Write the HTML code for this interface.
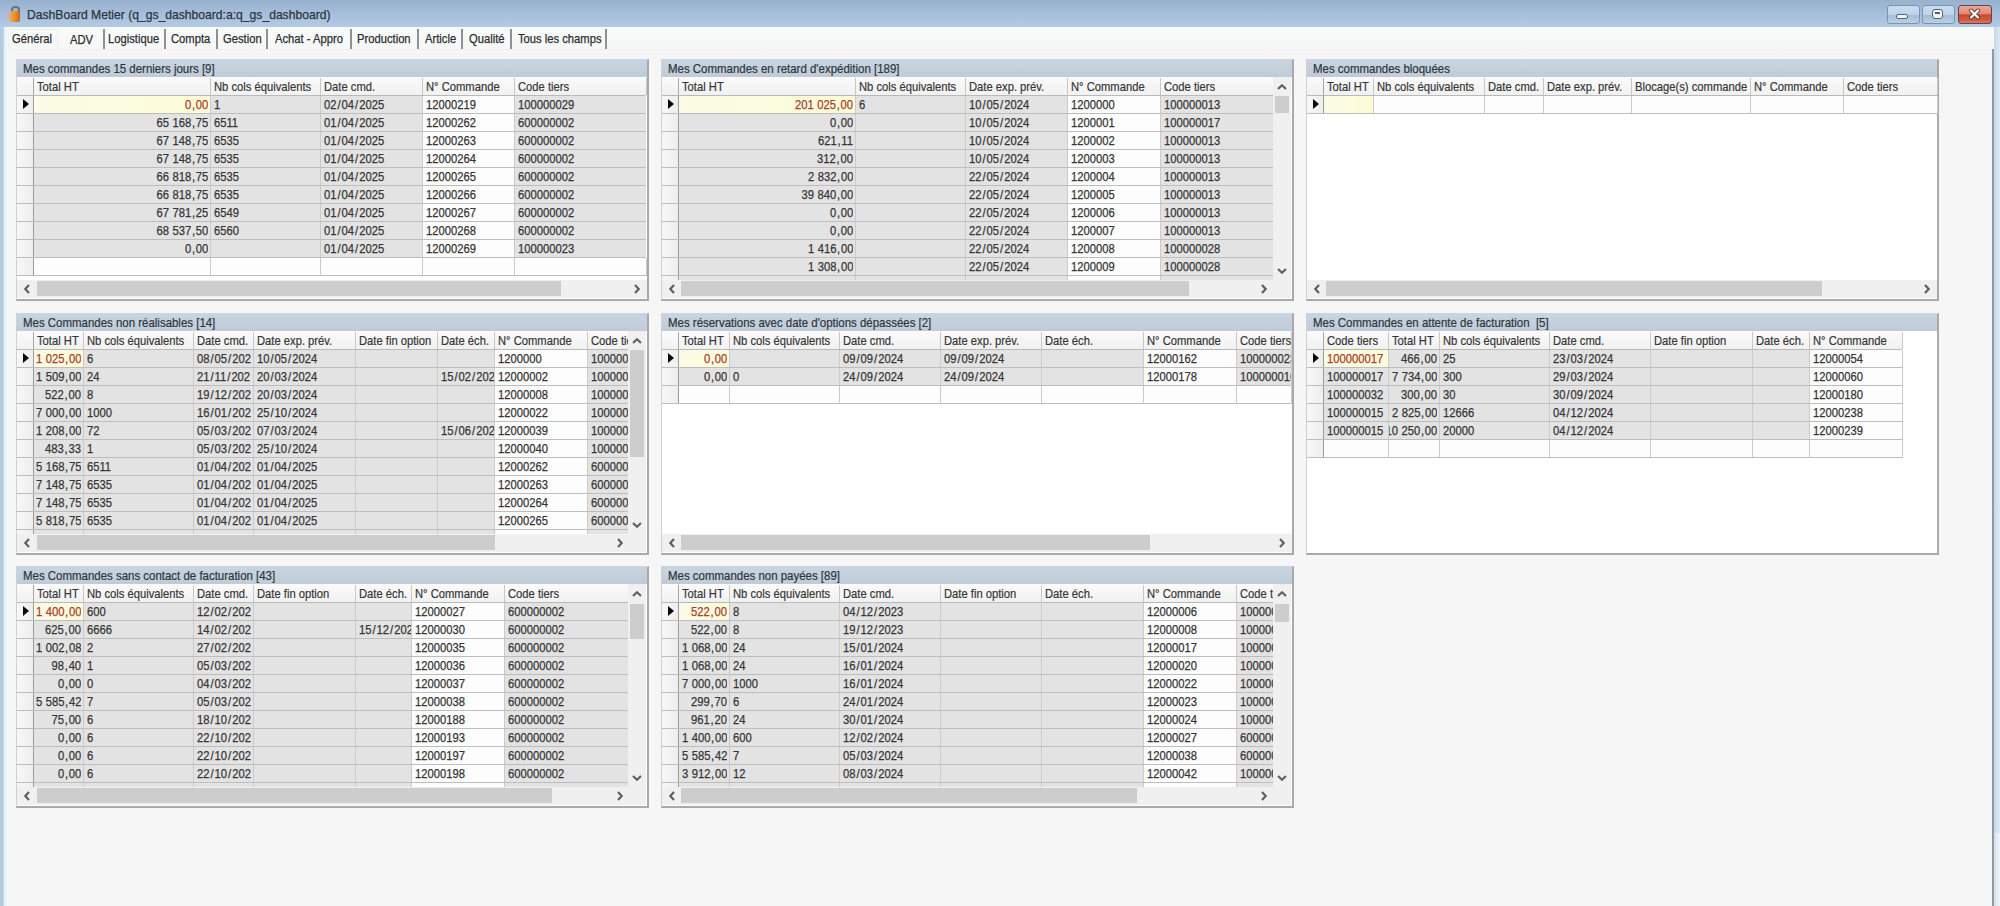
<!DOCTYPE html>
<html><head><meta charset="utf-8"><title>DashBoard Metier</title>
<style>
html,body{margin:0;padding:0;}
body{width:2000px;height:906px;position:relative;overflow:hidden;background:#f6f6f6;font-family:"Liberation Sans", sans-serif;}
.t{position:absolute;white-space:pre;overflow:hidden;font-family:"Liberation Sans", sans-serif;font-size:12.2px;-webkit-text-stroke:0.25px currentColor;}
.t i{font-style:normal;display:inline-block;transform:scaleX(0.92);transform-origin:0 50%;}
.tr{text-align:right;direction:rtl;}
.ti i{transform:scaleX(0.94);}
.th,.ti{-webkit-text-stroke:0.2px currentColor;}
.t b{font-weight:normal;}
.t b.sl{margin:0 1.1px;}
.t b.cm{margin:0 0.8px;}
.t b.sp{margin:0 0.2px;}
.tr i{transform-origin:100% 50%;direction:ltr;unicode-bidi:embed;}
</style></head><body>
<!-- window frame -->
<div style="position:absolute;left:0;top:0;width:2000px;height:27px;background:linear-gradient(#98b1cf,#b3cbe4)"></div>
<div style="position:absolute;left:0;top:27px;width:4px;height:879px;background:linear-gradient(90deg,#b0c8e2,#bcd2e8)"></div><div style="position:absolute;left:4px;top:27px;width:3px;height:879px;background:#eaf4f8"></div>
<div style="position:absolute;left:1992px;top:49px;width:2px;height:857px;background:#8c9aa6"></div>
<div style="position:absolute;left:1994px;top:27px;width:6px;height:806px;background:linear-gradient(90deg,#c6d8e8,#dfe9f2)"></div><div style="position:absolute;left:1994px;top:833px;width:6px;height:73px;background:linear-gradient(90deg,#d4e2ee,#f2f6f9)"></div>
<!-- lock icon -->
<div style="position:absolute;left:11px;top:6px;width:5px;height:6px;border:2px solid #66757e;border-bottom:none;border-radius:4px 4px 0 0"></div>
<div style="position:absolute;left:9px;top:11px;width:11px;height:11px;border-radius:4px 4px 2px 2px;background:linear-gradient(90deg,#f0b060,#e8892a 60%,#c06a20)"></div>
<div class="t" style="left:27px;top:5px;height:20px;line-height:20px;font-size:13.2px;color:#2a3440"><i>DashBoard Metier (q_gs_dashboard:a:q_gs_dashboard)</i></div>
<!-- window buttons -->
<div style="position:absolute;left:1887px;top:5px;width:33px;height:19px;border:1.5px solid #7a93b0;border-radius:3px;background:linear-gradient(#c8dcf0,#bed3ea 50%,#a4bcd6 52%,#b8cfe6);box-sizing:border-box"></div>
<div style="position:absolute;left:1896px;top:14px;width:10px;height:3px;border:1.2px solid #56646f;border-radius:2px;background:#f2f5f8"></div>
<div style="position:absolute;left:1922px;top:5px;width:33px;height:19px;border:1.5px solid #7a93b0;border-radius:3px;background:linear-gradient(#c8dcf0,#bed3ea 50%,#a4bcd6 52%,#b8cfe6);box-sizing:border-box"></div>
<div style="position:absolute;left:1932px;top:9px;width:9px;height:8px;border:1.5px solid #56646f;border-radius:3px;background:#f2f5f8"></div>
<div style="position:absolute;left:1935px;top:12px;width:5px;height:2px;background:#56646f"></div>
<div style="position:absolute;left:1958px;top:5px;width:34px;height:19px;border:1.5px solid #6a4040;border-radius:3px;background:linear-gradient(#eaa898,#e08a78 45%,#c84a2e 52%,#cc5a40 80%,#d87a66);box-sizing:border-box"></div>
<svg style="position:absolute;left:1968px;top:8px" width="13" height="12" viewBox="0 0 13 12"><path d="M3 2.5 L10 9.5 M10 2.5 L3 9.5" stroke="#5a3a3a" stroke-width="4" stroke-linecap="round"/><path d="M3 2.5 L10 9.5 M10 2.5 L3 9.5" stroke="#fbf4f2" stroke-width="2.3" stroke-linecap="round"/></svg>
<!-- tab strip -->
<div style="position:absolute;left:7px;top:27px;width:1987px;height:22px;background:linear-gradient(#f8fbfb,#f6f7f7)"></div><div style="position:absolute;left:7px;top:49px;width:1985px;height:1px;background:#f0f0f0"></div>
<div style="position:absolute;left:8px;top:29px;width:50px;height:20px;border:1px solid #efefef;border-bottom:none;box-sizing:border-box"></div>
<div class="t" style="left:12px;top:30px;height:18px;line-height:18px;color:#2e2e2e"><i>Général</i></div>
<div class="t" style="left:70px;top:31px;height:18px;line-height:18px;color:#2e2e2e"><i>ADV</i></div>
<div class="t" style="left:108px;top:30px;height:18px;line-height:18px;color:#2e2e2e"><i>Logistique</i></div>
<div style="position:absolute;left:103px;top:29px;width:2px;height:20px;background:#909090"></div>
<div class="t" style="left:171px;top:30px;height:18px;line-height:18px;color:#2e2e2e"><i>Compta</i></div>
<div style="position:absolute;left:164px;top:29px;width:2px;height:20px;background:#909090"></div>
<div class="t" style="left:223px;top:30px;height:18px;line-height:18px;color:#2e2e2e"><i>Gestion</i></div>
<div style="position:absolute;left:216px;top:29px;width:2px;height:20px;background:#909090"></div>
<div class="t" style="left:275px;top:30px;height:18px;line-height:18px;color:#2e2e2e"><i>Achat - Appro</i></div>
<div style="position:absolute;left:266px;top:29px;width:2px;height:20px;background:#909090"></div>
<div class="t" style="left:357px;top:30px;height:18px;line-height:18px;color:#2e2e2e"><i>Production</i></div>
<div style="position:absolute;left:350px;top:29px;width:2px;height:20px;background:#909090"></div>
<div class="t" style="left:425px;top:30px;height:18px;line-height:18px;color:#2e2e2e"><i>Article</i></div>
<div style="position:absolute;left:417px;top:29px;width:2px;height:20px;background:#909090"></div>
<div class="t" style="left:469px;top:30px;height:18px;line-height:18px;color:#2e2e2e"><i>Qualité</i></div>
<div style="position:absolute;left:461px;top:29px;width:2px;height:20px;background:#909090"></div>
<div class="t" style="left:518px;top:30px;height:18px;line-height:18px;color:#2e2e2e"><i>Tous les champs</i></div>
<div style="position:absolute;left:510px;top:29px;width:2px;height:20px;background:#909090"></div>
<div style="position:absolute;left:605px;top:29px;width:2px;height:20px;background:#909090"></div>
<div style="position:absolute;left:16px;top:59px;width:633px;height:242px;background:#ffffff;box-sizing:border-box;border-left:1px solid #d0d0d0;border-top:1px solid #d6d6d6;border-right:2px solid #a9a9a9;border-bottom:2px solid #a9a9a9;"></div>
<div style="position:absolute;left:17px;top:59px;width:630px;height:18px;background:linear-gradient(#c9d5e0,#bfccd8);"></div>
<div class="t ti" style="left:23px;top:60px;width:500px;height:17px;text-align:left;line-height:17px;color:#2e353c;line-height:19px"><i>Mes commandes 15 derniers jours [9]</i></div>
<div style="position:absolute;left:17px;top:77px;width:629px;height:18px;background:linear-gradient(#fbfbfb,#f1f1f1);"></div>
<div style="position:absolute;left:17px;top:95px;width:629px;height:1px;background:#b9b9b9;"></div>
<div style="position:absolute;left:33px;top:78px;width:1px;height:17px;background:#a8a8a8;"></div>
<div style="position:absolute;left:210px;top:78px;width:1px;height:17px;background:#c8c8c8;"></div>
<div style="position:absolute;left:320px;top:78px;width:1px;height:17px;background:#c8c8c8;"></div>
<div style="position:absolute;left:422px;top:78px;width:1px;height:17px;background:#c8c8c8;"></div>
<div style="position:absolute;left:514px;top:78px;width:1px;height:17px;background:#c8c8c8;"></div>
<div class="t th" style="left:37px;top:77px;width:173px;height:18px;line-height:20px;color:#363636"><i>Total HT</i></div>
<div class="t th" style="left:214px;top:77px;width:106px;height:18px;line-height:20px;color:#363636"><i>Nb cols équivalents</i></div>
<div class="t th" style="left:324px;top:77px;width:98px;height:18px;line-height:20px;color:#363636"><i>Date cmd.</i></div>
<div class="t th" style="left:426px;top:77px;width:88px;height:18px;line-height:20px;color:#363636"><i>N° Commande</i></div>
<div class="t th" style="left:518px;top:77px;width:128px;height:18px;line-height:20px;color:#363636"><i>Code tiers</i></div>
<div style="position:absolute;left:17px;top:96px;width:16px;height:17px;background:linear-gradient(90deg,#f7f7f7,#eeeeee);"></div>
<div style="position:absolute;left:23px;top:99px;width:0;height:0;border-top:5.5px solid transparent;border-bottom:5.5px solid transparent;border-left:6px solid #0a0a0a"></div>
<div style="position:absolute;left:34px;top:96px;width:176px;height:17px;background:linear-gradient(90deg,#fbfbe6,#fcfcd8);"></div>
<div class="t tr" style="left:34px;top:96px;width:174px;height:17px;line-height:18px;color:#a8402a"><i>0<b class="cm">,</b>00</i></div>
<div style="position:absolute;left:211px;top:96px;width:109px;height:17px;background:#e3e3e3;"></div>
<div class="t" style="left:214px;top:96px;width:106px;height:17px;line-height:18px;color:#353535"><i>1</i></div>
<div style="position:absolute;left:321px;top:96px;width:101px;height:17px;background:#e3e3e3;"></div>
<div class="t" style="left:324px;top:96px;width:98px;height:17px;line-height:18px;color:#353535"><i>02<b class="sl">/</b>04<b class="sl">/</b>2025</i></div>
<div style="position:absolute;left:423px;top:96px;width:91px;height:17px;background:#fdfdfd;"></div>
<div class="t" style="left:426px;top:96px;width:88px;height:17px;line-height:18px;color:#353535"><i>12000219</i></div>
<div style="position:absolute;left:515px;top:96px;width:131px;height:17px;background:#e3e3e3;"></div>
<div class="t" style="left:518px;top:96px;width:128px;height:17px;line-height:18px;color:#353535"><i>100000029</i></div>
<div style="position:absolute;left:17px;top:113px;width:629px;height:1px;background:#bdbdbd;"></div>
<div style="position:absolute;left:33px;top:96px;width:1px;height:17px;background:#9c9c9c;"></div>
<div style="position:absolute;left:210px;top:96px;width:1px;height:17px;background:#cbcbcb;"></div>
<div style="position:absolute;left:320px;top:96px;width:1px;height:17px;background:#cbcbcb;"></div>
<div style="position:absolute;left:422px;top:96px;width:1px;height:17px;background:#cbcbcb;"></div>
<div style="position:absolute;left:514px;top:96px;width:1px;height:17px;background:#cbcbcb;"></div>
<div style="position:absolute;left:17px;top:114px;width:16px;height:17px;background:linear-gradient(90deg,#f7f7f7,#eeeeee);"></div>
<div style="position:absolute;left:34px;top:114px;width:176px;height:17px;background:#e3e3e3;"></div>
<div class="t tr" style="left:34px;top:114px;width:174px;height:17px;line-height:18px;color:#353535"><i>65<b class="sp"> </b>168<b class="cm">,</b>75</i></div>
<div style="position:absolute;left:211px;top:114px;width:109px;height:17px;background:#e3e3e3;"></div>
<div class="t" style="left:214px;top:114px;width:106px;height:17px;line-height:18px;color:#353535"><i>6511</i></div>
<div style="position:absolute;left:321px;top:114px;width:101px;height:17px;background:#e3e3e3;"></div>
<div class="t" style="left:324px;top:114px;width:98px;height:17px;line-height:18px;color:#353535"><i>01<b class="sl">/</b>04<b class="sl">/</b>2025</i></div>
<div style="position:absolute;left:423px;top:114px;width:91px;height:17px;background:#fdfdfd;"></div>
<div class="t" style="left:426px;top:114px;width:88px;height:17px;line-height:18px;color:#353535"><i>12000262</i></div>
<div style="position:absolute;left:515px;top:114px;width:131px;height:17px;background:#e3e3e3;"></div>
<div class="t" style="left:518px;top:114px;width:128px;height:17px;line-height:18px;color:#353535"><i>600000002</i></div>
<div style="position:absolute;left:17px;top:131px;width:629px;height:1px;background:#bdbdbd;"></div>
<div style="position:absolute;left:33px;top:114px;width:1px;height:17px;background:#9c9c9c;"></div>
<div style="position:absolute;left:210px;top:114px;width:1px;height:17px;background:#cbcbcb;"></div>
<div style="position:absolute;left:320px;top:114px;width:1px;height:17px;background:#cbcbcb;"></div>
<div style="position:absolute;left:422px;top:114px;width:1px;height:17px;background:#cbcbcb;"></div>
<div style="position:absolute;left:514px;top:114px;width:1px;height:17px;background:#cbcbcb;"></div>
<div style="position:absolute;left:17px;top:132px;width:16px;height:17px;background:linear-gradient(90deg,#f7f7f7,#eeeeee);"></div>
<div style="position:absolute;left:34px;top:132px;width:176px;height:17px;background:#e3e3e3;"></div>
<div class="t tr" style="left:34px;top:132px;width:174px;height:17px;line-height:18px;color:#353535"><i>67<b class="sp"> </b>148<b class="cm">,</b>75</i></div>
<div style="position:absolute;left:211px;top:132px;width:109px;height:17px;background:#e3e3e3;"></div>
<div class="t" style="left:214px;top:132px;width:106px;height:17px;line-height:18px;color:#353535"><i>6535</i></div>
<div style="position:absolute;left:321px;top:132px;width:101px;height:17px;background:#e3e3e3;"></div>
<div class="t" style="left:324px;top:132px;width:98px;height:17px;line-height:18px;color:#353535"><i>01<b class="sl">/</b>04<b class="sl">/</b>2025</i></div>
<div style="position:absolute;left:423px;top:132px;width:91px;height:17px;background:#fdfdfd;"></div>
<div class="t" style="left:426px;top:132px;width:88px;height:17px;line-height:18px;color:#353535"><i>12000263</i></div>
<div style="position:absolute;left:515px;top:132px;width:131px;height:17px;background:#e3e3e3;"></div>
<div class="t" style="left:518px;top:132px;width:128px;height:17px;line-height:18px;color:#353535"><i>600000002</i></div>
<div style="position:absolute;left:17px;top:149px;width:629px;height:1px;background:#bdbdbd;"></div>
<div style="position:absolute;left:33px;top:132px;width:1px;height:17px;background:#9c9c9c;"></div>
<div style="position:absolute;left:210px;top:132px;width:1px;height:17px;background:#cbcbcb;"></div>
<div style="position:absolute;left:320px;top:132px;width:1px;height:17px;background:#cbcbcb;"></div>
<div style="position:absolute;left:422px;top:132px;width:1px;height:17px;background:#cbcbcb;"></div>
<div style="position:absolute;left:514px;top:132px;width:1px;height:17px;background:#cbcbcb;"></div>
<div style="position:absolute;left:17px;top:150px;width:16px;height:17px;background:linear-gradient(90deg,#f7f7f7,#eeeeee);"></div>
<div style="position:absolute;left:34px;top:150px;width:176px;height:17px;background:#e3e3e3;"></div>
<div class="t tr" style="left:34px;top:150px;width:174px;height:17px;line-height:18px;color:#353535"><i>67<b class="sp"> </b>148<b class="cm">,</b>75</i></div>
<div style="position:absolute;left:211px;top:150px;width:109px;height:17px;background:#e3e3e3;"></div>
<div class="t" style="left:214px;top:150px;width:106px;height:17px;line-height:18px;color:#353535"><i>6535</i></div>
<div style="position:absolute;left:321px;top:150px;width:101px;height:17px;background:#e3e3e3;"></div>
<div class="t" style="left:324px;top:150px;width:98px;height:17px;line-height:18px;color:#353535"><i>01<b class="sl">/</b>04<b class="sl">/</b>2025</i></div>
<div style="position:absolute;left:423px;top:150px;width:91px;height:17px;background:#fdfdfd;"></div>
<div class="t" style="left:426px;top:150px;width:88px;height:17px;line-height:18px;color:#353535"><i>12000264</i></div>
<div style="position:absolute;left:515px;top:150px;width:131px;height:17px;background:#e3e3e3;"></div>
<div class="t" style="left:518px;top:150px;width:128px;height:17px;line-height:18px;color:#353535"><i>600000002</i></div>
<div style="position:absolute;left:17px;top:167px;width:629px;height:1px;background:#bdbdbd;"></div>
<div style="position:absolute;left:33px;top:150px;width:1px;height:17px;background:#9c9c9c;"></div>
<div style="position:absolute;left:210px;top:150px;width:1px;height:17px;background:#cbcbcb;"></div>
<div style="position:absolute;left:320px;top:150px;width:1px;height:17px;background:#cbcbcb;"></div>
<div style="position:absolute;left:422px;top:150px;width:1px;height:17px;background:#cbcbcb;"></div>
<div style="position:absolute;left:514px;top:150px;width:1px;height:17px;background:#cbcbcb;"></div>
<div style="position:absolute;left:17px;top:168px;width:16px;height:17px;background:linear-gradient(90deg,#f7f7f7,#eeeeee);"></div>
<div style="position:absolute;left:34px;top:168px;width:176px;height:17px;background:#e3e3e3;"></div>
<div class="t tr" style="left:34px;top:168px;width:174px;height:17px;line-height:18px;color:#353535"><i>66<b class="sp"> </b>818<b class="cm">,</b>75</i></div>
<div style="position:absolute;left:211px;top:168px;width:109px;height:17px;background:#e3e3e3;"></div>
<div class="t" style="left:214px;top:168px;width:106px;height:17px;line-height:18px;color:#353535"><i>6535</i></div>
<div style="position:absolute;left:321px;top:168px;width:101px;height:17px;background:#e3e3e3;"></div>
<div class="t" style="left:324px;top:168px;width:98px;height:17px;line-height:18px;color:#353535"><i>01<b class="sl">/</b>04<b class="sl">/</b>2025</i></div>
<div style="position:absolute;left:423px;top:168px;width:91px;height:17px;background:#fdfdfd;"></div>
<div class="t" style="left:426px;top:168px;width:88px;height:17px;line-height:18px;color:#353535"><i>12000265</i></div>
<div style="position:absolute;left:515px;top:168px;width:131px;height:17px;background:#e3e3e3;"></div>
<div class="t" style="left:518px;top:168px;width:128px;height:17px;line-height:18px;color:#353535"><i>600000002</i></div>
<div style="position:absolute;left:17px;top:185px;width:629px;height:1px;background:#bdbdbd;"></div>
<div style="position:absolute;left:33px;top:168px;width:1px;height:17px;background:#9c9c9c;"></div>
<div style="position:absolute;left:210px;top:168px;width:1px;height:17px;background:#cbcbcb;"></div>
<div style="position:absolute;left:320px;top:168px;width:1px;height:17px;background:#cbcbcb;"></div>
<div style="position:absolute;left:422px;top:168px;width:1px;height:17px;background:#cbcbcb;"></div>
<div style="position:absolute;left:514px;top:168px;width:1px;height:17px;background:#cbcbcb;"></div>
<div style="position:absolute;left:17px;top:186px;width:16px;height:17px;background:linear-gradient(90deg,#f7f7f7,#eeeeee);"></div>
<div style="position:absolute;left:34px;top:186px;width:176px;height:17px;background:#e3e3e3;"></div>
<div class="t tr" style="left:34px;top:186px;width:174px;height:17px;line-height:18px;color:#353535"><i>66<b class="sp"> </b>818<b class="cm">,</b>75</i></div>
<div style="position:absolute;left:211px;top:186px;width:109px;height:17px;background:#e3e3e3;"></div>
<div class="t" style="left:214px;top:186px;width:106px;height:17px;line-height:18px;color:#353535"><i>6535</i></div>
<div style="position:absolute;left:321px;top:186px;width:101px;height:17px;background:#e3e3e3;"></div>
<div class="t" style="left:324px;top:186px;width:98px;height:17px;line-height:18px;color:#353535"><i>01<b class="sl">/</b>04<b class="sl">/</b>2025</i></div>
<div style="position:absolute;left:423px;top:186px;width:91px;height:17px;background:#fdfdfd;"></div>
<div class="t" style="left:426px;top:186px;width:88px;height:17px;line-height:18px;color:#353535"><i>12000266</i></div>
<div style="position:absolute;left:515px;top:186px;width:131px;height:17px;background:#e3e3e3;"></div>
<div class="t" style="left:518px;top:186px;width:128px;height:17px;line-height:18px;color:#353535"><i>600000002</i></div>
<div style="position:absolute;left:17px;top:203px;width:629px;height:1px;background:#bdbdbd;"></div>
<div style="position:absolute;left:33px;top:186px;width:1px;height:17px;background:#9c9c9c;"></div>
<div style="position:absolute;left:210px;top:186px;width:1px;height:17px;background:#cbcbcb;"></div>
<div style="position:absolute;left:320px;top:186px;width:1px;height:17px;background:#cbcbcb;"></div>
<div style="position:absolute;left:422px;top:186px;width:1px;height:17px;background:#cbcbcb;"></div>
<div style="position:absolute;left:514px;top:186px;width:1px;height:17px;background:#cbcbcb;"></div>
<div style="position:absolute;left:17px;top:204px;width:16px;height:17px;background:linear-gradient(90deg,#f7f7f7,#eeeeee);"></div>
<div style="position:absolute;left:34px;top:204px;width:176px;height:17px;background:#e3e3e3;"></div>
<div class="t tr" style="left:34px;top:204px;width:174px;height:17px;line-height:18px;color:#353535"><i>67<b class="sp"> </b>781<b class="cm">,</b>25</i></div>
<div style="position:absolute;left:211px;top:204px;width:109px;height:17px;background:#e3e3e3;"></div>
<div class="t" style="left:214px;top:204px;width:106px;height:17px;line-height:18px;color:#353535"><i>6549</i></div>
<div style="position:absolute;left:321px;top:204px;width:101px;height:17px;background:#e3e3e3;"></div>
<div class="t" style="left:324px;top:204px;width:98px;height:17px;line-height:18px;color:#353535"><i>01<b class="sl">/</b>04<b class="sl">/</b>2025</i></div>
<div style="position:absolute;left:423px;top:204px;width:91px;height:17px;background:#fdfdfd;"></div>
<div class="t" style="left:426px;top:204px;width:88px;height:17px;line-height:18px;color:#353535"><i>12000267</i></div>
<div style="position:absolute;left:515px;top:204px;width:131px;height:17px;background:#e3e3e3;"></div>
<div class="t" style="left:518px;top:204px;width:128px;height:17px;line-height:18px;color:#353535"><i>600000002</i></div>
<div style="position:absolute;left:17px;top:221px;width:629px;height:1px;background:#bdbdbd;"></div>
<div style="position:absolute;left:33px;top:204px;width:1px;height:17px;background:#9c9c9c;"></div>
<div style="position:absolute;left:210px;top:204px;width:1px;height:17px;background:#cbcbcb;"></div>
<div style="position:absolute;left:320px;top:204px;width:1px;height:17px;background:#cbcbcb;"></div>
<div style="position:absolute;left:422px;top:204px;width:1px;height:17px;background:#cbcbcb;"></div>
<div style="position:absolute;left:514px;top:204px;width:1px;height:17px;background:#cbcbcb;"></div>
<div style="position:absolute;left:17px;top:222px;width:16px;height:17px;background:linear-gradient(90deg,#f7f7f7,#eeeeee);"></div>
<div style="position:absolute;left:34px;top:222px;width:176px;height:17px;background:#e3e3e3;"></div>
<div class="t tr" style="left:34px;top:222px;width:174px;height:17px;line-height:18px;color:#353535"><i>68<b class="sp"> </b>537<b class="cm">,</b>50</i></div>
<div style="position:absolute;left:211px;top:222px;width:109px;height:17px;background:#e3e3e3;"></div>
<div class="t" style="left:214px;top:222px;width:106px;height:17px;line-height:18px;color:#353535"><i>6560</i></div>
<div style="position:absolute;left:321px;top:222px;width:101px;height:17px;background:#e3e3e3;"></div>
<div class="t" style="left:324px;top:222px;width:98px;height:17px;line-height:18px;color:#353535"><i>01<b class="sl">/</b>04<b class="sl">/</b>2025</i></div>
<div style="position:absolute;left:423px;top:222px;width:91px;height:17px;background:#fdfdfd;"></div>
<div class="t" style="left:426px;top:222px;width:88px;height:17px;line-height:18px;color:#353535"><i>12000268</i></div>
<div style="position:absolute;left:515px;top:222px;width:131px;height:17px;background:#e3e3e3;"></div>
<div class="t" style="left:518px;top:222px;width:128px;height:17px;line-height:18px;color:#353535"><i>600000002</i></div>
<div style="position:absolute;left:17px;top:239px;width:629px;height:1px;background:#bdbdbd;"></div>
<div style="position:absolute;left:33px;top:222px;width:1px;height:17px;background:#9c9c9c;"></div>
<div style="position:absolute;left:210px;top:222px;width:1px;height:17px;background:#cbcbcb;"></div>
<div style="position:absolute;left:320px;top:222px;width:1px;height:17px;background:#cbcbcb;"></div>
<div style="position:absolute;left:422px;top:222px;width:1px;height:17px;background:#cbcbcb;"></div>
<div style="position:absolute;left:514px;top:222px;width:1px;height:17px;background:#cbcbcb;"></div>
<div style="position:absolute;left:17px;top:240px;width:16px;height:17px;background:linear-gradient(90deg,#f7f7f7,#eeeeee);"></div>
<div style="position:absolute;left:34px;top:240px;width:176px;height:17px;background:#e3e3e3;"></div>
<div class="t tr" style="left:34px;top:240px;width:174px;height:17px;line-height:18px;color:#353535"><i>0<b class="cm">,</b>00</i></div>
<div style="position:absolute;left:211px;top:240px;width:109px;height:17px;background:#e3e3e3;"></div>
<div style="position:absolute;left:321px;top:240px;width:101px;height:17px;background:#e3e3e3;"></div>
<div class="t" style="left:324px;top:240px;width:98px;height:17px;line-height:18px;color:#353535"><i>01<b class="sl">/</b>04<b class="sl">/</b>2025</i></div>
<div style="position:absolute;left:423px;top:240px;width:91px;height:17px;background:#fdfdfd;"></div>
<div class="t" style="left:426px;top:240px;width:88px;height:17px;line-height:18px;color:#353535"><i>12000269</i></div>
<div style="position:absolute;left:515px;top:240px;width:131px;height:17px;background:#e3e3e3;"></div>
<div class="t" style="left:518px;top:240px;width:128px;height:17px;line-height:18px;color:#353535"><i>100000023</i></div>
<div style="position:absolute;left:17px;top:257px;width:629px;height:1px;background:#bdbdbd;"></div>
<div style="position:absolute;left:33px;top:240px;width:1px;height:17px;background:#9c9c9c;"></div>
<div style="position:absolute;left:210px;top:240px;width:1px;height:17px;background:#cbcbcb;"></div>
<div style="position:absolute;left:320px;top:240px;width:1px;height:17px;background:#cbcbcb;"></div>
<div style="position:absolute;left:422px;top:240px;width:1px;height:17px;background:#cbcbcb;"></div>
<div style="position:absolute;left:514px;top:240px;width:1px;height:17px;background:#cbcbcb;"></div>
<div style="position:absolute;left:17px;top:258px;width:16px;height:17px;background:linear-gradient(90deg,#f7f7f7,#eeeeee);"></div>
<div style="position:absolute;left:34px;top:258px;width:176px;height:17px;background:#fdfdfd;"></div>
<div style="position:absolute;left:211px;top:258px;width:109px;height:17px;background:#fdfdfd;"></div>
<div style="position:absolute;left:321px;top:258px;width:101px;height:17px;background:#fdfdfd;"></div>
<div style="position:absolute;left:423px;top:258px;width:91px;height:17px;background:#fdfdfd;"></div>
<div style="position:absolute;left:515px;top:258px;width:131px;height:17px;background:#fdfdfd;"></div>
<div style="position:absolute;left:17px;top:275px;width:629px;height:1px;background:#bdbdbd;"></div>
<div style="position:absolute;left:33px;top:258px;width:1px;height:17px;background:#9c9c9c;"></div>
<div style="position:absolute;left:210px;top:258px;width:1px;height:17px;background:#cbcbcb;"></div>
<div style="position:absolute;left:320px;top:258px;width:1px;height:17px;background:#cbcbcb;"></div>
<div style="position:absolute;left:422px;top:258px;width:1px;height:17px;background:#cbcbcb;"></div>
<div style="position:absolute;left:514px;top:258px;width:1px;height:17px;background:#cbcbcb;"></div>
<div style="position:absolute;left:646px;top:258px;width:1px;height:18px;background:#cbcbcb;"></div>
<div style="position:absolute;left:646px;top:78px;width:1px;height:17px;background:#c8c8c8;"></div>
<div style="position:absolute;left:17px;top:280px;width:630px;height:18px;background:#f0f0f0;"></div>
<div style="position:absolute;left:37px;top:281px;width:524px;height:15px;background:#cdcdcd;"></div>
<div style="position:absolute;left:24px;top:284px;line-height:0"><svg width="6" height="10" viewBox="0 0 6 10"><path d="M5 1 L1.3 5 L5 9" fill="none" stroke="#606060" stroke-width="2.2"/></svg></div>
<div style="position:absolute;left:634px;top:284px;line-height:0"><svg width="6" height="10" viewBox="0 0 6 10"><path d="M1 1 L4.7 5 L1 9" fill="none" stroke="#606060" stroke-width="2.2"/></svg></div>
<div style="position:absolute;left:661px;top:59px;width:633px;height:242px;background:#ffffff;box-sizing:border-box;border-left:1px solid #d0d0d0;border-top:1px solid #d6d6d6;border-right:2px solid #a9a9a9;border-bottom:2px solid #a9a9a9;"></div>
<div style="position:absolute;left:662px;top:59px;width:630px;height:18px;background:linear-gradient(#c9d5e0,#bfccd8);"></div>
<div class="t ti" style="left:668px;top:60px;width:500px;height:17px;text-align:left;line-height:17px;color:#2e353c;line-height:19px"><i>Mes Commandes en retard d&#x27;expédition [189]</i></div>
<div style="position:absolute;left:662px;top:77px;width:611px;height:18px;background:linear-gradient(#fbfbfb,#f1f1f1);"></div>
<div style="position:absolute;left:662px;top:95px;width:611px;height:1px;background:#b9b9b9;"></div>
<div style="position:absolute;left:678px;top:78px;width:1px;height:17px;background:#a8a8a8;"></div>
<div style="position:absolute;left:855px;top:78px;width:1px;height:17px;background:#c8c8c8;"></div>
<div style="position:absolute;left:965px;top:78px;width:1px;height:17px;background:#c8c8c8;"></div>
<div style="position:absolute;left:1067px;top:78px;width:1px;height:17px;background:#c8c8c8;"></div>
<div style="position:absolute;left:1160px;top:78px;width:1px;height:17px;background:#c8c8c8;"></div>
<div class="t th" style="left:682px;top:77px;width:173px;height:18px;line-height:20px;color:#363636"><i>Total HT</i></div>
<div class="t th" style="left:859px;top:77px;width:106px;height:18px;line-height:20px;color:#363636"><i>Nb cols équivalents</i></div>
<div class="t th" style="left:969px;top:77px;width:98px;height:18px;line-height:20px;color:#363636"><i>Date exp. prév.</i></div>
<div class="t th" style="left:1071px;top:77px;width:89px;height:18px;line-height:20px;color:#363636"><i>N° Commande</i></div>
<div class="t th" style="left:1164px;top:77px;width:109px;height:18px;line-height:20px;color:#363636"><i>Code tiers</i></div>
<div style="position:absolute;left:662px;top:96px;width:16px;height:17px;background:linear-gradient(90deg,#f7f7f7,#eeeeee);"></div>
<div style="position:absolute;left:668px;top:99px;width:0;height:0;border-top:5.5px solid transparent;border-bottom:5.5px solid transparent;border-left:6px solid #0a0a0a"></div>
<div style="position:absolute;left:679px;top:96px;width:176px;height:17px;background:linear-gradient(90deg,#fbfbe6,#fcfcd8);"></div>
<div class="t tr" style="left:679px;top:96px;width:174px;height:17px;line-height:18px;color:#a8402a"><i>201<b class="sp"> </b>025<b class="cm">,</b>00</i></div>
<div style="position:absolute;left:856px;top:96px;width:109px;height:17px;background:#e3e3e3;"></div>
<div class="t" style="left:859px;top:96px;width:106px;height:17px;line-height:18px;color:#353535"><i>6</i></div>
<div style="position:absolute;left:966px;top:96px;width:101px;height:17px;background:#e3e3e3;"></div>
<div class="t" style="left:969px;top:96px;width:98px;height:17px;line-height:18px;color:#353535"><i>10<b class="sl">/</b>05<b class="sl">/</b>2024</i></div>
<div style="position:absolute;left:1068px;top:96px;width:92px;height:17px;background:#fdfdfd;"></div>
<div class="t" style="left:1071px;top:96px;width:89px;height:17px;line-height:18px;color:#353535"><i>1200000</i></div>
<div style="position:absolute;left:1161px;top:96px;width:112px;height:17px;background:#e3e3e3;"></div>
<div class="t" style="left:1164px;top:96px;width:109px;height:17px;line-height:18px;color:#353535"><i>100000013</i></div>
<div style="position:absolute;left:662px;top:113px;width:611px;height:1px;background:#bdbdbd;"></div>
<div style="position:absolute;left:678px;top:96px;width:1px;height:17px;background:#9c9c9c;"></div>
<div style="position:absolute;left:855px;top:96px;width:1px;height:17px;background:#cbcbcb;"></div>
<div style="position:absolute;left:965px;top:96px;width:1px;height:17px;background:#cbcbcb;"></div>
<div style="position:absolute;left:1067px;top:96px;width:1px;height:17px;background:#cbcbcb;"></div>
<div style="position:absolute;left:1160px;top:96px;width:1px;height:17px;background:#cbcbcb;"></div>
<div style="position:absolute;left:662px;top:114px;width:16px;height:17px;background:linear-gradient(90deg,#f7f7f7,#eeeeee);"></div>
<div style="position:absolute;left:679px;top:114px;width:176px;height:17px;background:#e3e3e3;"></div>
<div class="t tr" style="left:679px;top:114px;width:174px;height:17px;line-height:18px;color:#353535"><i>0<b class="cm">,</b>00</i></div>
<div style="position:absolute;left:856px;top:114px;width:109px;height:17px;background:#e3e3e3;"></div>
<div style="position:absolute;left:966px;top:114px;width:101px;height:17px;background:#e3e3e3;"></div>
<div class="t" style="left:969px;top:114px;width:98px;height:17px;line-height:18px;color:#353535"><i>10<b class="sl">/</b>05<b class="sl">/</b>2024</i></div>
<div style="position:absolute;left:1068px;top:114px;width:92px;height:17px;background:#fdfdfd;"></div>
<div class="t" style="left:1071px;top:114px;width:89px;height:17px;line-height:18px;color:#353535"><i>1200001</i></div>
<div style="position:absolute;left:1161px;top:114px;width:112px;height:17px;background:#e3e3e3;"></div>
<div class="t" style="left:1164px;top:114px;width:109px;height:17px;line-height:18px;color:#353535"><i>100000017</i></div>
<div style="position:absolute;left:662px;top:131px;width:611px;height:1px;background:#bdbdbd;"></div>
<div style="position:absolute;left:678px;top:114px;width:1px;height:17px;background:#9c9c9c;"></div>
<div style="position:absolute;left:855px;top:114px;width:1px;height:17px;background:#cbcbcb;"></div>
<div style="position:absolute;left:965px;top:114px;width:1px;height:17px;background:#cbcbcb;"></div>
<div style="position:absolute;left:1067px;top:114px;width:1px;height:17px;background:#cbcbcb;"></div>
<div style="position:absolute;left:1160px;top:114px;width:1px;height:17px;background:#cbcbcb;"></div>
<div style="position:absolute;left:662px;top:132px;width:16px;height:17px;background:linear-gradient(90deg,#f7f7f7,#eeeeee);"></div>
<div style="position:absolute;left:679px;top:132px;width:176px;height:17px;background:#e3e3e3;"></div>
<div class="t tr" style="left:679px;top:132px;width:174px;height:17px;line-height:18px;color:#353535"><i>621<b class="cm">,</b>11</i></div>
<div style="position:absolute;left:856px;top:132px;width:109px;height:17px;background:#e3e3e3;"></div>
<div style="position:absolute;left:966px;top:132px;width:101px;height:17px;background:#e3e3e3;"></div>
<div class="t" style="left:969px;top:132px;width:98px;height:17px;line-height:18px;color:#353535"><i>10<b class="sl">/</b>05<b class="sl">/</b>2024</i></div>
<div style="position:absolute;left:1068px;top:132px;width:92px;height:17px;background:#fdfdfd;"></div>
<div class="t" style="left:1071px;top:132px;width:89px;height:17px;line-height:18px;color:#353535"><i>1200002</i></div>
<div style="position:absolute;left:1161px;top:132px;width:112px;height:17px;background:#e3e3e3;"></div>
<div class="t" style="left:1164px;top:132px;width:109px;height:17px;line-height:18px;color:#353535"><i>100000013</i></div>
<div style="position:absolute;left:662px;top:149px;width:611px;height:1px;background:#bdbdbd;"></div>
<div style="position:absolute;left:678px;top:132px;width:1px;height:17px;background:#9c9c9c;"></div>
<div style="position:absolute;left:855px;top:132px;width:1px;height:17px;background:#cbcbcb;"></div>
<div style="position:absolute;left:965px;top:132px;width:1px;height:17px;background:#cbcbcb;"></div>
<div style="position:absolute;left:1067px;top:132px;width:1px;height:17px;background:#cbcbcb;"></div>
<div style="position:absolute;left:1160px;top:132px;width:1px;height:17px;background:#cbcbcb;"></div>
<div style="position:absolute;left:662px;top:150px;width:16px;height:17px;background:linear-gradient(90deg,#f7f7f7,#eeeeee);"></div>
<div style="position:absolute;left:679px;top:150px;width:176px;height:17px;background:#e3e3e3;"></div>
<div class="t tr" style="left:679px;top:150px;width:174px;height:17px;line-height:18px;color:#353535"><i>312<b class="cm">,</b>00</i></div>
<div style="position:absolute;left:856px;top:150px;width:109px;height:17px;background:#e3e3e3;"></div>
<div style="position:absolute;left:966px;top:150px;width:101px;height:17px;background:#e3e3e3;"></div>
<div class="t" style="left:969px;top:150px;width:98px;height:17px;line-height:18px;color:#353535"><i>10<b class="sl">/</b>05<b class="sl">/</b>2024</i></div>
<div style="position:absolute;left:1068px;top:150px;width:92px;height:17px;background:#fdfdfd;"></div>
<div class="t" style="left:1071px;top:150px;width:89px;height:17px;line-height:18px;color:#353535"><i>1200003</i></div>
<div style="position:absolute;left:1161px;top:150px;width:112px;height:17px;background:#e3e3e3;"></div>
<div class="t" style="left:1164px;top:150px;width:109px;height:17px;line-height:18px;color:#353535"><i>100000013</i></div>
<div style="position:absolute;left:662px;top:167px;width:611px;height:1px;background:#bdbdbd;"></div>
<div style="position:absolute;left:678px;top:150px;width:1px;height:17px;background:#9c9c9c;"></div>
<div style="position:absolute;left:855px;top:150px;width:1px;height:17px;background:#cbcbcb;"></div>
<div style="position:absolute;left:965px;top:150px;width:1px;height:17px;background:#cbcbcb;"></div>
<div style="position:absolute;left:1067px;top:150px;width:1px;height:17px;background:#cbcbcb;"></div>
<div style="position:absolute;left:1160px;top:150px;width:1px;height:17px;background:#cbcbcb;"></div>
<div style="position:absolute;left:662px;top:168px;width:16px;height:17px;background:linear-gradient(90deg,#f7f7f7,#eeeeee);"></div>
<div style="position:absolute;left:679px;top:168px;width:176px;height:17px;background:#e3e3e3;"></div>
<div class="t tr" style="left:679px;top:168px;width:174px;height:17px;line-height:18px;color:#353535"><i>2<b class="sp"> </b>832<b class="cm">,</b>00</i></div>
<div style="position:absolute;left:856px;top:168px;width:109px;height:17px;background:#e3e3e3;"></div>
<div style="position:absolute;left:966px;top:168px;width:101px;height:17px;background:#e3e3e3;"></div>
<div class="t" style="left:969px;top:168px;width:98px;height:17px;line-height:18px;color:#353535"><i>22<b class="sl">/</b>05<b class="sl">/</b>2024</i></div>
<div style="position:absolute;left:1068px;top:168px;width:92px;height:17px;background:#fdfdfd;"></div>
<div class="t" style="left:1071px;top:168px;width:89px;height:17px;line-height:18px;color:#353535"><i>1200004</i></div>
<div style="position:absolute;left:1161px;top:168px;width:112px;height:17px;background:#e3e3e3;"></div>
<div class="t" style="left:1164px;top:168px;width:109px;height:17px;line-height:18px;color:#353535"><i>100000013</i></div>
<div style="position:absolute;left:662px;top:185px;width:611px;height:1px;background:#bdbdbd;"></div>
<div style="position:absolute;left:678px;top:168px;width:1px;height:17px;background:#9c9c9c;"></div>
<div style="position:absolute;left:855px;top:168px;width:1px;height:17px;background:#cbcbcb;"></div>
<div style="position:absolute;left:965px;top:168px;width:1px;height:17px;background:#cbcbcb;"></div>
<div style="position:absolute;left:1067px;top:168px;width:1px;height:17px;background:#cbcbcb;"></div>
<div style="position:absolute;left:1160px;top:168px;width:1px;height:17px;background:#cbcbcb;"></div>
<div style="position:absolute;left:662px;top:186px;width:16px;height:17px;background:linear-gradient(90deg,#f7f7f7,#eeeeee);"></div>
<div style="position:absolute;left:679px;top:186px;width:176px;height:17px;background:#e3e3e3;"></div>
<div class="t tr" style="left:679px;top:186px;width:174px;height:17px;line-height:18px;color:#353535"><i>39<b class="sp"> </b>840<b class="cm">,</b>00</i></div>
<div style="position:absolute;left:856px;top:186px;width:109px;height:17px;background:#e3e3e3;"></div>
<div style="position:absolute;left:966px;top:186px;width:101px;height:17px;background:#e3e3e3;"></div>
<div class="t" style="left:969px;top:186px;width:98px;height:17px;line-height:18px;color:#353535"><i>22<b class="sl">/</b>05<b class="sl">/</b>2024</i></div>
<div style="position:absolute;left:1068px;top:186px;width:92px;height:17px;background:#fdfdfd;"></div>
<div class="t" style="left:1071px;top:186px;width:89px;height:17px;line-height:18px;color:#353535"><i>1200005</i></div>
<div style="position:absolute;left:1161px;top:186px;width:112px;height:17px;background:#e3e3e3;"></div>
<div class="t" style="left:1164px;top:186px;width:109px;height:17px;line-height:18px;color:#353535"><i>100000013</i></div>
<div style="position:absolute;left:662px;top:203px;width:611px;height:1px;background:#bdbdbd;"></div>
<div style="position:absolute;left:678px;top:186px;width:1px;height:17px;background:#9c9c9c;"></div>
<div style="position:absolute;left:855px;top:186px;width:1px;height:17px;background:#cbcbcb;"></div>
<div style="position:absolute;left:965px;top:186px;width:1px;height:17px;background:#cbcbcb;"></div>
<div style="position:absolute;left:1067px;top:186px;width:1px;height:17px;background:#cbcbcb;"></div>
<div style="position:absolute;left:1160px;top:186px;width:1px;height:17px;background:#cbcbcb;"></div>
<div style="position:absolute;left:662px;top:204px;width:16px;height:17px;background:linear-gradient(90deg,#f7f7f7,#eeeeee);"></div>
<div style="position:absolute;left:679px;top:204px;width:176px;height:17px;background:#e3e3e3;"></div>
<div class="t tr" style="left:679px;top:204px;width:174px;height:17px;line-height:18px;color:#353535"><i>0<b class="cm">,</b>00</i></div>
<div style="position:absolute;left:856px;top:204px;width:109px;height:17px;background:#e3e3e3;"></div>
<div style="position:absolute;left:966px;top:204px;width:101px;height:17px;background:#e3e3e3;"></div>
<div class="t" style="left:969px;top:204px;width:98px;height:17px;line-height:18px;color:#353535"><i>22<b class="sl">/</b>05<b class="sl">/</b>2024</i></div>
<div style="position:absolute;left:1068px;top:204px;width:92px;height:17px;background:#fdfdfd;"></div>
<div class="t" style="left:1071px;top:204px;width:89px;height:17px;line-height:18px;color:#353535"><i>1200006</i></div>
<div style="position:absolute;left:1161px;top:204px;width:112px;height:17px;background:#e3e3e3;"></div>
<div class="t" style="left:1164px;top:204px;width:109px;height:17px;line-height:18px;color:#353535"><i>100000013</i></div>
<div style="position:absolute;left:662px;top:221px;width:611px;height:1px;background:#bdbdbd;"></div>
<div style="position:absolute;left:678px;top:204px;width:1px;height:17px;background:#9c9c9c;"></div>
<div style="position:absolute;left:855px;top:204px;width:1px;height:17px;background:#cbcbcb;"></div>
<div style="position:absolute;left:965px;top:204px;width:1px;height:17px;background:#cbcbcb;"></div>
<div style="position:absolute;left:1067px;top:204px;width:1px;height:17px;background:#cbcbcb;"></div>
<div style="position:absolute;left:1160px;top:204px;width:1px;height:17px;background:#cbcbcb;"></div>
<div style="position:absolute;left:662px;top:222px;width:16px;height:17px;background:linear-gradient(90deg,#f7f7f7,#eeeeee);"></div>
<div style="position:absolute;left:679px;top:222px;width:176px;height:17px;background:#e3e3e3;"></div>
<div class="t tr" style="left:679px;top:222px;width:174px;height:17px;line-height:18px;color:#353535"><i>0<b class="cm">,</b>00</i></div>
<div style="position:absolute;left:856px;top:222px;width:109px;height:17px;background:#e3e3e3;"></div>
<div style="position:absolute;left:966px;top:222px;width:101px;height:17px;background:#e3e3e3;"></div>
<div class="t" style="left:969px;top:222px;width:98px;height:17px;line-height:18px;color:#353535"><i>22<b class="sl">/</b>05<b class="sl">/</b>2024</i></div>
<div style="position:absolute;left:1068px;top:222px;width:92px;height:17px;background:#fdfdfd;"></div>
<div class="t" style="left:1071px;top:222px;width:89px;height:17px;line-height:18px;color:#353535"><i>1200007</i></div>
<div style="position:absolute;left:1161px;top:222px;width:112px;height:17px;background:#e3e3e3;"></div>
<div class="t" style="left:1164px;top:222px;width:109px;height:17px;line-height:18px;color:#353535"><i>100000013</i></div>
<div style="position:absolute;left:662px;top:239px;width:611px;height:1px;background:#bdbdbd;"></div>
<div style="position:absolute;left:678px;top:222px;width:1px;height:17px;background:#9c9c9c;"></div>
<div style="position:absolute;left:855px;top:222px;width:1px;height:17px;background:#cbcbcb;"></div>
<div style="position:absolute;left:965px;top:222px;width:1px;height:17px;background:#cbcbcb;"></div>
<div style="position:absolute;left:1067px;top:222px;width:1px;height:17px;background:#cbcbcb;"></div>
<div style="position:absolute;left:1160px;top:222px;width:1px;height:17px;background:#cbcbcb;"></div>
<div style="position:absolute;left:662px;top:240px;width:16px;height:17px;background:linear-gradient(90deg,#f7f7f7,#eeeeee);"></div>
<div style="position:absolute;left:679px;top:240px;width:176px;height:17px;background:#e3e3e3;"></div>
<div class="t tr" style="left:679px;top:240px;width:174px;height:17px;line-height:18px;color:#353535"><i>1<b class="sp"> </b>416<b class="cm">,</b>00</i></div>
<div style="position:absolute;left:856px;top:240px;width:109px;height:17px;background:#e3e3e3;"></div>
<div style="position:absolute;left:966px;top:240px;width:101px;height:17px;background:#e3e3e3;"></div>
<div class="t" style="left:969px;top:240px;width:98px;height:17px;line-height:18px;color:#353535"><i>22<b class="sl">/</b>05<b class="sl">/</b>2024</i></div>
<div style="position:absolute;left:1068px;top:240px;width:92px;height:17px;background:#fdfdfd;"></div>
<div class="t" style="left:1071px;top:240px;width:89px;height:17px;line-height:18px;color:#353535"><i>1200008</i></div>
<div style="position:absolute;left:1161px;top:240px;width:112px;height:17px;background:#e3e3e3;"></div>
<div class="t" style="left:1164px;top:240px;width:109px;height:17px;line-height:18px;color:#353535"><i>100000028</i></div>
<div style="position:absolute;left:662px;top:257px;width:611px;height:1px;background:#bdbdbd;"></div>
<div style="position:absolute;left:678px;top:240px;width:1px;height:17px;background:#9c9c9c;"></div>
<div style="position:absolute;left:855px;top:240px;width:1px;height:17px;background:#cbcbcb;"></div>
<div style="position:absolute;left:965px;top:240px;width:1px;height:17px;background:#cbcbcb;"></div>
<div style="position:absolute;left:1067px;top:240px;width:1px;height:17px;background:#cbcbcb;"></div>
<div style="position:absolute;left:1160px;top:240px;width:1px;height:17px;background:#cbcbcb;"></div>
<div style="position:absolute;left:662px;top:258px;width:16px;height:17px;background:linear-gradient(90deg,#f7f7f7,#eeeeee);"></div>
<div style="position:absolute;left:679px;top:258px;width:176px;height:17px;background:#e3e3e3;"></div>
<div class="t tr" style="left:679px;top:258px;width:174px;height:17px;line-height:18px;color:#353535"><i>1<b class="sp"> </b>308<b class="cm">,</b>00</i></div>
<div style="position:absolute;left:856px;top:258px;width:109px;height:17px;background:#e3e3e3;"></div>
<div style="position:absolute;left:966px;top:258px;width:101px;height:17px;background:#e3e3e3;"></div>
<div class="t" style="left:969px;top:258px;width:98px;height:17px;line-height:18px;color:#353535"><i>22<b class="sl">/</b>05<b class="sl">/</b>2024</i></div>
<div style="position:absolute;left:1068px;top:258px;width:92px;height:17px;background:#fdfdfd;"></div>
<div class="t" style="left:1071px;top:258px;width:89px;height:17px;line-height:18px;color:#353535"><i>1200009</i></div>
<div style="position:absolute;left:1161px;top:258px;width:112px;height:17px;background:#e3e3e3;"></div>
<div class="t" style="left:1164px;top:258px;width:109px;height:17px;line-height:18px;color:#353535"><i>100000028</i></div>
<div style="position:absolute;left:662px;top:275px;width:611px;height:1px;background:#bdbdbd;"></div>
<div style="position:absolute;left:678px;top:258px;width:1px;height:17px;background:#9c9c9c;"></div>
<div style="position:absolute;left:855px;top:258px;width:1px;height:17px;background:#cbcbcb;"></div>
<div style="position:absolute;left:965px;top:258px;width:1px;height:17px;background:#cbcbcb;"></div>
<div style="position:absolute;left:1067px;top:258px;width:1px;height:17px;background:#cbcbcb;"></div>
<div style="position:absolute;left:1160px;top:258px;width:1px;height:17px;background:#cbcbcb;"></div>
<div style="position:absolute;left:662px;top:276px;width:16px;height:4px;background:linear-gradient(90deg,#f7f7f7,#eeeeee);"></div>
<div style="position:absolute;left:679px;top:276px;width:176px;height:4px;background:#e3e3e3;"></div>
<div style="position:absolute;left:856px;top:276px;width:109px;height:4px;background:#e3e3e3;"></div>
<div style="position:absolute;left:966px;top:276px;width:101px;height:4px;background:#e3e3e3;"></div>
<div style="position:absolute;left:1068px;top:276px;width:92px;height:4px;background:#fdfdfd;"></div>
<div style="position:absolute;left:1161px;top:276px;width:112px;height:4px;background:#e3e3e3;"></div>
<div style="position:absolute;left:678px;top:276px;width:1px;height:4px;background:#9c9c9c;"></div>
<div style="position:absolute;left:855px;top:276px;width:1px;height:4px;background:#cbcbcb;"></div>
<div style="position:absolute;left:965px;top:276px;width:1px;height:4px;background:#cbcbcb;"></div>
<div style="position:absolute;left:1067px;top:276px;width:1px;height:4px;background:#cbcbcb;"></div>
<div style="position:absolute;left:1160px;top:276px;width:1px;height:4px;background:#cbcbcb;"></div>
<div style="position:absolute;left:1273px;top:77px;width:18px;height:221px;background:#f0f0f0;"></div>
<div style="position:absolute;left:1275px;top:96px;width:14px;height:17px;background:#cdcdcd;"></div>
<div style="position:absolute;left:1277px;top:84px;line-height:0"><svg width="10" height="6" viewBox="0 0 10 6"><path d="M1 5 L5 1.3 L9 5" fill="none" stroke="#606060" stroke-width="2.2"/></svg></div>
<div style="position:absolute;left:1277px;top:268px;line-height:0"><svg width="10" height="6" viewBox="0 0 10 6"><path d="M1 1 L5 4.7 L9 1" fill="none" stroke="#606060" stroke-width="2.2"/></svg></div>
<div style="position:absolute;left:662px;top:280px;width:611px;height:18px;background:#f0f0f0;"></div>
<div style="position:absolute;left:681px;top:281px;width:508px;height:15px;background:#cdcdcd;"></div>
<div style="position:absolute;left:669px;top:284px;line-height:0"><svg width="6" height="10" viewBox="0 0 6 10"><path d="M5 1 L1.3 5 L5 9" fill="none" stroke="#606060" stroke-width="2.2"/></svg></div>
<div style="position:absolute;left:1261px;top:284px;line-height:0"><svg width="6" height="10" viewBox="0 0 6 10"><path d="M1 1 L4.7 5 L1 9" fill="none" stroke="#606060" stroke-width="2.2"/></svg></div>
<div style="position:absolute;left:1306px;top:59px;width:633px;height:242px;background:#ffffff;box-sizing:border-box;border-left:1px solid #d0d0d0;border-top:1px solid #d6d6d6;border-right:2px solid #a9a9a9;border-bottom:2px solid #a9a9a9;"></div>
<div style="position:absolute;left:1307px;top:59px;width:630px;height:18px;background:linear-gradient(#c9d5e0,#bfccd8);"></div>
<div class="t ti" style="left:1313px;top:60px;width:500px;height:17px;text-align:left;line-height:17px;color:#2e353c;line-height:19px"><i>Mes commandes bloquées</i></div>
<div style="position:absolute;left:1307px;top:77px;width:630px;height:18px;background:linear-gradient(#fbfbfb,#f1f1f1);"></div>
<div style="position:absolute;left:1307px;top:95px;width:630px;height:1px;background:#b9b9b9;"></div>
<div style="position:absolute;left:1323px;top:78px;width:1px;height:17px;background:#a8a8a8;"></div>
<div style="position:absolute;left:1373px;top:78px;width:1px;height:17px;background:#c8c8c8;"></div>
<div style="position:absolute;left:1484px;top:78px;width:1px;height:17px;background:#c8c8c8;"></div>
<div style="position:absolute;left:1543px;top:78px;width:1px;height:17px;background:#c8c8c8;"></div>
<div style="position:absolute;left:1631px;top:78px;width:1px;height:17px;background:#c8c8c8;"></div>
<div style="position:absolute;left:1750px;top:78px;width:1px;height:17px;background:#c8c8c8;"></div>
<div style="position:absolute;left:1843px;top:78px;width:1px;height:17px;background:#c8c8c8;"></div>
<div class="t th" style="left:1327px;top:77px;width:46px;height:18px;line-height:20px;color:#363636"><i>Total HT</i></div>
<div class="t th" style="left:1377px;top:77px;width:107px;height:18px;line-height:20px;color:#363636"><i>Nb cols équivalents</i></div>
<div class="t th" style="left:1488px;top:77px;width:55px;height:18px;line-height:20px;color:#363636"><i>Date cmd.</i></div>
<div class="t th" style="left:1547px;top:77px;width:84px;height:18px;line-height:20px;color:#363636"><i>Date exp. prév.</i></div>
<div class="t th" style="left:1635px;top:77px;width:115px;height:18px;line-height:20px;color:#363636"><i>Blocage(s) commande</i></div>
<div class="t th" style="left:1754px;top:77px;width:89px;height:18px;line-height:20px;color:#363636"><i>N° Commande</i></div>
<div class="t th" style="left:1847px;top:77px;width:90px;height:18px;line-height:20px;color:#363636"><i>Code tiers</i></div>
<div style="position:absolute;left:1307px;top:96px;width:16px;height:17px;background:linear-gradient(90deg,#f7f7f7,#eeeeee);"></div>
<div style="position:absolute;left:1313px;top:99px;width:0;height:0;border-top:5.5px solid transparent;border-bottom:5.5px solid transparent;border-left:6px solid #0a0a0a"></div>
<div style="position:absolute;left:1324px;top:96px;width:49px;height:17px;background:linear-gradient(90deg,#fbfbe6,#fcfcd8);"></div>
<div style="position:absolute;left:1374px;top:96px;width:110px;height:17px;background:#fdfdfd;"></div>
<div style="position:absolute;left:1485px;top:96px;width:58px;height:17px;background:#fdfdfd;"></div>
<div style="position:absolute;left:1544px;top:96px;width:87px;height:17px;background:#fdfdfd;"></div>
<div style="position:absolute;left:1632px;top:96px;width:118px;height:17px;background:#fdfdfd;"></div>
<div style="position:absolute;left:1751px;top:96px;width:92px;height:17px;background:#fdfdfd;"></div>
<div style="position:absolute;left:1844px;top:96px;width:93px;height:17px;background:#fdfdfd;"></div>
<div style="position:absolute;left:1307px;top:113px;width:630px;height:1px;background:#bdbdbd;"></div>
<div style="position:absolute;left:1323px;top:96px;width:1px;height:17px;background:#9c9c9c;"></div>
<div style="position:absolute;left:1373px;top:96px;width:1px;height:17px;background:#cbcbcb;"></div>
<div style="position:absolute;left:1484px;top:96px;width:1px;height:17px;background:#cbcbcb;"></div>
<div style="position:absolute;left:1543px;top:96px;width:1px;height:17px;background:#cbcbcb;"></div>
<div style="position:absolute;left:1631px;top:96px;width:1px;height:17px;background:#cbcbcb;"></div>
<div style="position:absolute;left:1750px;top:96px;width:1px;height:17px;background:#cbcbcb;"></div>
<div style="position:absolute;left:1843px;top:96px;width:1px;height:17px;background:#cbcbcb;"></div>
<div style="position:absolute;left:1937px;top:96px;width:1px;height:18px;background:#cbcbcb;"></div>
<div style="position:absolute;left:1937px;top:78px;width:1px;height:17px;background:#c8c8c8;"></div>
<div style="position:absolute;left:1307px;top:280px;width:630px;height:18px;background:#f0f0f0;"></div>
<div style="position:absolute;left:1326px;top:281px;width:496px;height:15px;background:#cdcdcd;"></div>
<div style="position:absolute;left:1314px;top:284px;line-height:0"><svg width="6" height="10" viewBox="0 0 6 10"><path d="M5 1 L1.3 5 L5 9" fill="none" stroke="#606060" stroke-width="2.2"/></svg></div>
<div style="position:absolute;left:1924px;top:284px;line-height:0"><svg width="6" height="10" viewBox="0 0 6 10"><path d="M1 1 L4.7 5 L1 9" fill="none" stroke="#606060" stroke-width="2.2"/></svg></div>
<div style="position:absolute;left:16px;top:313px;width:633px;height:242px;background:#ffffff;box-sizing:border-box;border-left:1px solid #d0d0d0;border-top:1px solid #d6d6d6;border-right:2px solid #a9a9a9;border-bottom:2px solid #a9a9a9;"></div>
<div style="position:absolute;left:17px;top:313px;width:630px;height:18px;background:linear-gradient(#c9d5e0,#bfccd8);"></div>
<div class="t ti" style="left:23px;top:314px;width:500px;height:17px;text-align:left;line-height:17px;color:#2e353c;line-height:19px"><i>Mes Commandes non réalisables [14]</i></div>
<div style="position:absolute;left:17px;top:331px;width:611px;height:18px;background:linear-gradient(#fbfbfb,#f1f1f1);"></div>
<div style="position:absolute;left:17px;top:349px;width:611px;height:1px;background:#b9b9b9;"></div>
<div style="position:absolute;left:33px;top:332px;width:1px;height:17px;background:#a8a8a8;"></div>
<div style="position:absolute;left:83px;top:332px;width:1px;height:17px;background:#c8c8c8;"></div>
<div style="position:absolute;left:193px;top:332px;width:1px;height:17px;background:#c8c8c8;"></div>
<div style="position:absolute;left:253px;top:332px;width:1px;height:17px;background:#c8c8c8;"></div>
<div style="position:absolute;left:355px;top:332px;width:1px;height:17px;background:#c8c8c8;"></div>
<div style="position:absolute;left:437px;top:332px;width:1px;height:17px;background:#c8c8c8;"></div>
<div style="position:absolute;left:494px;top:332px;width:1px;height:17px;background:#c8c8c8;"></div>
<div style="position:absolute;left:587px;top:332px;width:1px;height:17px;background:#c8c8c8;"></div>
<div class="t th" style="left:37px;top:331px;width:46px;height:18px;line-height:20px;color:#363636"><i>Total HT</i></div>
<div class="t th" style="left:87px;top:331px;width:106px;height:18px;line-height:20px;color:#363636"><i>Nb cols équivalents</i></div>
<div class="t th" style="left:197px;top:331px;width:56px;height:18px;line-height:20px;color:#363636"><i>Date cmd.</i></div>
<div class="t th" style="left:257px;top:331px;width:98px;height:18px;line-height:20px;color:#363636"><i>Date exp. prév.</i></div>
<div class="t th" style="left:359px;top:331px;width:78px;height:18px;line-height:20px;color:#363636"><i>Date fin option</i></div>
<div class="t th" style="left:441px;top:331px;width:53px;height:18px;line-height:20px;color:#363636"><i>Date éch.</i></div>
<div class="t th" style="left:498px;top:331px;width:89px;height:18px;line-height:20px;color:#363636"><i>N° Commande</i></div>
<div class="t th" style="left:591px;top:331px;width:37px;height:18px;line-height:20px;color:#363636"><i>Code tiers</i></div>
<div style="position:absolute;left:17px;top:350px;width:16px;height:17px;background:linear-gradient(90deg,#f7f7f7,#eeeeee);"></div>
<div style="position:absolute;left:23px;top:353px;width:0;height:0;border-top:5.5px solid transparent;border-bottom:5.5px solid transparent;border-left:6px solid #0a0a0a"></div>
<div style="position:absolute;left:34px;top:350px;width:49px;height:17px;background:linear-gradient(90deg,#fbfbe6,#fcfcd8);"></div>
<div class="t tr" style="left:34px;top:350px;width:47px;height:17px;line-height:18px;color:#a8402a"><i>1<b class="sp"> </b>025<b class="cm">,</b>00</i></div>
<div style="position:absolute;left:84px;top:350px;width:109px;height:17px;background:#e3e3e3;"></div>
<div class="t" style="left:87px;top:350px;width:106px;height:17px;line-height:18px;color:#353535"><i>6</i></div>
<div style="position:absolute;left:194px;top:350px;width:59px;height:17px;background:#e3e3e3;"></div>
<div class="t" style="left:197px;top:350px;width:56px;height:17px;line-height:18px;color:#353535"><i>08<b class="sl">/</b>05<b class="sl">/</b>202</i></div>
<div style="position:absolute;left:254px;top:350px;width:101px;height:17px;background:#e3e3e3;"></div>
<div class="t" style="left:257px;top:350px;width:98px;height:17px;line-height:18px;color:#353535"><i>10<b class="sl">/</b>05<b class="sl">/</b>2024</i></div>
<div style="position:absolute;left:356px;top:350px;width:81px;height:17px;background:#e3e3e3;"></div>
<div style="position:absolute;left:438px;top:350px;width:56px;height:17px;background:#e3e3e3;"></div>
<div style="position:absolute;left:495px;top:350px;width:92px;height:17px;background:#fdfdfd;"></div>
<div class="t" style="left:498px;top:350px;width:89px;height:17px;line-height:18px;color:#353535"><i>1200000</i></div>
<div style="position:absolute;left:588px;top:350px;width:40px;height:17px;background:#e3e3e3;"></div>
<div class="t" style="left:591px;top:350px;width:37px;height:17px;line-height:18px;color:#353535"><i>100000013</i></div>
<div style="position:absolute;left:17px;top:367px;width:611px;height:1px;background:#bdbdbd;"></div>
<div style="position:absolute;left:33px;top:350px;width:1px;height:17px;background:#9c9c9c;"></div>
<div style="position:absolute;left:83px;top:350px;width:1px;height:17px;background:#cbcbcb;"></div>
<div style="position:absolute;left:193px;top:350px;width:1px;height:17px;background:#cbcbcb;"></div>
<div style="position:absolute;left:253px;top:350px;width:1px;height:17px;background:#cbcbcb;"></div>
<div style="position:absolute;left:355px;top:350px;width:1px;height:17px;background:#cbcbcb;"></div>
<div style="position:absolute;left:437px;top:350px;width:1px;height:17px;background:#cbcbcb;"></div>
<div style="position:absolute;left:494px;top:350px;width:1px;height:17px;background:#cbcbcb;"></div>
<div style="position:absolute;left:587px;top:350px;width:1px;height:17px;background:#cbcbcb;"></div>
<div style="position:absolute;left:17px;top:368px;width:16px;height:17px;background:linear-gradient(90deg,#f7f7f7,#eeeeee);"></div>
<div style="position:absolute;left:34px;top:368px;width:49px;height:17px;background:#e3e3e3;"></div>
<div class="t tr" style="left:34px;top:368px;width:47px;height:17px;line-height:18px;color:#353535"><i>1<b class="sp"> </b>509<b class="cm">,</b>00</i></div>
<div style="position:absolute;left:84px;top:368px;width:109px;height:17px;background:#e3e3e3;"></div>
<div class="t" style="left:87px;top:368px;width:106px;height:17px;line-height:18px;color:#353535"><i>24</i></div>
<div style="position:absolute;left:194px;top:368px;width:59px;height:17px;background:#e3e3e3;"></div>
<div class="t" style="left:197px;top:368px;width:56px;height:17px;line-height:18px;color:#353535"><i>21<b class="sl">/</b>11<b class="sl">/</b>202</i></div>
<div style="position:absolute;left:254px;top:368px;width:101px;height:17px;background:#e3e3e3;"></div>
<div class="t" style="left:257px;top:368px;width:98px;height:17px;line-height:18px;color:#353535"><i>20<b class="sl">/</b>03<b class="sl">/</b>2024</i></div>
<div style="position:absolute;left:356px;top:368px;width:81px;height:17px;background:#e3e3e3;"></div>
<div style="position:absolute;left:438px;top:368px;width:56px;height:17px;background:#e3e3e3;"></div>
<div class="t" style="left:441px;top:368px;width:53px;height:17px;line-height:18px;color:#353535"><i>15<b class="sl">/</b>02<b class="sl">/</b>202</i></div>
<div style="position:absolute;left:495px;top:368px;width:92px;height:17px;background:#fdfdfd;"></div>
<div class="t" style="left:498px;top:368px;width:89px;height:17px;line-height:18px;color:#353535"><i>12000002</i></div>
<div style="position:absolute;left:588px;top:368px;width:40px;height:17px;background:#e3e3e3;"></div>
<div class="t" style="left:591px;top:368px;width:37px;height:17px;line-height:18px;color:#353535"><i>100000013</i></div>
<div style="position:absolute;left:17px;top:385px;width:611px;height:1px;background:#bdbdbd;"></div>
<div style="position:absolute;left:33px;top:368px;width:1px;height:17px;background:#9c9c9c;"></div>
<div style="position:absolute;left:83px;top:368px;width:1px;height:17px;background:#cbcbcb;"></div>
<div style="position:absolute;left:193px;top:368px;width:1px;height:17px;background:#cbcbcb;"></div>
<div style="position:absolute;left:253px;top:368px;width:1px;height:17px;background:#cbcbcb;"></div>
<div style="position:absolute;left:355px;top:368px;width:1px;height:17px;background:#cbcbcb;"></div>
<div style="position:absolute;left:437px;top:368px;width:1px;height:17px;background:#cbcbcb;"></div>
<div style="position:absolute;left:494px;top:368px;width:1px;height:17px;background:#cbcbcb;"></div>
<div style="position:absolute;left:587px;top:368px;width:1px;height:17px;background:#cbcbcb;"></div>
<div style="position:absolute;left:17px;top:386px;width:16px;height:17px;background:linear-gradient(90deg,#f7f7f7,#eeeeee);"></div>
<div style="position:absolute;left:34px;top:386px;width:49px;height:17px;background:#e3e3e3;"></div>
<div class="t tr" style="left:34px;top:386px;width:47px;height:17px;line-height:18px;color:#353535"><i>522<b class="cm">,</b>00</i></div>
<div style="position:absolute;left:84px;top:386px;width:109px;height:17px;background:#e3e3e3;"></div>
<div class="t" style="left:87px;top:386px;width:106px;height:17px;line-height:18px;color:#353535"><i>8</i></div>
<div style="position:absolute;left:194px;top:386px;width:59px;height:17px;background:#e3e3e3;"></div>
<div class="t" style="left:197px;top:386px;width:56px;height:17px;line-height:18px;color:#353535"><i>19<b class="sl">/</b>12<b class="sl">/</b>202</i></div>
<div style="position:absolute;left:254px;top:386px;width:101px;height:17px;background:#e3e3e3;"></div>
<div class="t" style="left:257px;top:386px;width:98px;height:17px;line-height:18px;color:#353535"><i>20<b class="sl">/</b>03<b class="sl">/</b>2024</i></div>
<div style="position:absolute;left:356px;top:386px;width:81px;height:17px;background:#e3e3e3;"></div>
<div style="position:absolute;left:438px;top:386px;width:56px;height:17px;background:#e3e3e3;"></div>
<div style="position:absolute;left:495px;top:386px;width:92px;height:17px;background:#fdfdfd;"></div>
<div class="t" style="left:498px;top:386px;width:89px;height:17px;line-height:18px;color:#353535"><i>12000008</i></div>
<div style="position:absolute;left:588px;top:386px;width:40px;height:17px;background:#e3e3e3;"></div>
<div class="t" style="left:591px;top:386px;width:37px;height:17px;line-height:18px;color:#353535"><i>100000013</i></div>
<div style="position:absolute;left:17px;top:403px;width:611px;height:1px;background:#bdbdbd;"></div>
<div style="position:absolute;left:33px;top:386px;width:1px;height:17px;background:#9c9c9c;"></div>
<div style="position:absolute;left:83px;top:386px;width:1px;height:17px;background:#cbcbcb;"></div>
<div style="position:absolute;left:193px;top:386px;width:1px;height:17px;background:#cbcbcb;"></div>
<div style="position:absolute;left:253px;top:386px;width:1px;height:17px;background:#cbcbcb;"></div>
<div style="position:absolute;left:355px;top:386px;width:1px;height:17px;background:#cbcbcb;"></div>
<div style="position:absolute;left:437px;top:386px;width:1px;height:17px;background:#cbcbcb;"></div>
<div style="position:absolute;left:494px;top:386px;width:1px;height:17px;background:#cbcbcb;"></div>
<div style="position:absolute;left:587px;top:386px;width:1px;height:17px;background:#cbcbcb;"></div>
<div style="position:absolute;left:17px;top:404px;width:16px;height:17px;background:linear-gradient(90deg,#f7f7f7,#eeeeee);"></div>
<div style="position:absolute;left:34px;top:404px;width:49px;height:17px;background:#e3e3e3;"></div>
<div class="t tr" style="left:34px;top:404px;width:47px;height:17px;line-height:18px;color:#353535"><i>7<b class="sp"> </b>000<b class="cm">,</b>00</i></div>
<div style="position:absolute;left:84px;top:404px;width:109px;height:17px;background:#e3e3e3;"></div>
<div class="t" style="left:87px;top:404px;width:106px;height:17px;line-height:18px;color:#353535"><i>1000</i></div>
<div style="position:absolute;left:194px;top:404px;width:59px;height:17px;background:#e3e3e3;"></div>
<div class="t" style="left:197px;top:404px;width:56px;height:17px;line-height:18px;color:#353535"><i>16<b class="sl">/</b>01<b class="sl">/</b>202</i></div>
<div style="position:absolute;left:254px;top:404px;width:101px;height:17px;background:#e3e3e3;"></div>
<div class="t" style="left:257px;top:404px;width:98px;height:17px;line-height:18px;color:#353535"><i>25<b class="sl">/</b>10<b class="sl">/</b>2024</i></div>
<div style="position:absolute;left:356px;top:404px;width:81px;height:17px;background:#e3e3e3;"></div>
<div style="position:absolute;left:438px;top:404px;width:56px;height:17px;background:#e3e3e3;"></div>
<div style="position:absolute;left:495px;top:404px;width:92px;height:17px;background:#fdfdfd;"></div>
<div class="t" style="left:498px;top:404px;width:89px;height:17px;line-height:18px;color:#353535"><i>12000022</i></div>
<div style="position:absolute;left:588px;top:404px;width:40px;height:17px;background:#e3e3e3;"></div>
<div class="t" style="left:591px;top:404px;width:37px;height:17px;line-height:18px;color:#353535"><i>100000013</i></div>
<div style="position:absolute;left:17px;top:421px;width:611px;height:1px;background:#bdbdbd;"></div>
<div style="position:absolute;left:33px;top:404px;width:1px;height:17px;background:#9c9c9c;"></div>
<div style="position:absolute;left:83px;top:404px;width:1px;height:17px;background:#cbcbcb;"></div>
<div style="position:absolute;left:193px;top:404px;width:1px;height:17px;background:#cbcbcb;"></div>
<div style="position:absolute;left:253px;top:404px;width:1px;height:17px;background:#cbcbcb;"></div>
<div style="position:absolute;left:355px;top:404px;width:1px;height:17px;background:#cbcbcb;"></div>
<div style="position:absolute;left:437px;top:404px;width:1px;height:17px;background:#cbcbcb;"></div>
<div style="position:absolute;left:494px;top:404px;width:1px;height:17px;background:#cbcbcb;"></div>
<div style="position:absolute;left:587px;top:404px;width:1px;height:17px;background:#cbcbcb;"></div>
<div style="position:absolute;left:17px;top:422px;width:16px;height:17px;background:linear-gradient(90deg,#f7f7f7,#eeeeee);"></div>
<div style="position:absolute;left:34px;top:422px;width:49px;height:17px;background:#e3e3e3;"></div>
<div class="t tr" style="left:34px;top:422px;width:47px;height:17px;line-height:18px;color:#353535"><i>1<b class="sp"> </b>208<b class="cm">,</b>00</i></div>
<div style="position:absolute;left:84px;top:422px;width:109px;height:17px;background:#e3e3e3;"></div>
<div class="t" style="left:87px;top:422px;width:106px;height:17px;line-height:18px;color:#353535"><i>72</i></div>
<div style="position:absolute;left:194px;top:422px;width:59px;height:17px;background:#e3e3e3;"></div>
<div class="t" style="left:197px;top:422px;width:56px;height:17px;line-height:18px;color:#353535"><i>05<b class="sl">/</b>03<b class="sl">/</b>202</i></div>
<div style="position:absolute;left:254px;top:422px;width:101px;height:17px;background:#e3e3e3;"></div>
<div class="t" style="left:257px;top:422px;width:98px;height:17px;line-height:18px;color:#353535"><i>07<b class="sl">/</b>03<b class="sl">/</b>2024</i></div>
<div style="position:absolute;left:356px;top:422px;width:81px;height:17px;background:#e3e3e3;"></div>
<div style="position:absolute;left:438px;top:422px;width:56px;height:17px;background:#e3e3e3;"></div>
<div class="t" style="left:441px;top:422px;width:53px;height:17px;line-height:18px;color:#353535"><i>15<b class="sl">/</b>06<b class="sl">/</b>202</i></div>
<div style="position:absolute;left:495px;top:422px;width:92px;height:17px;background:#fdfdfd;"></div>
<div class="t" style="left:498px;top:422px;width:89px;height:17px;line-height:18px;color:#353535"><i>12000039</i></div>
<div style="position:absolute;left:588px;top:422px;width:40px;height:17px;background:#e3e3e3;"></div>
<div class="t" style="left:591px;top:422px;width:37px;height:17px;line-height:18px;color:#353535"><i>100000013</i></div>
<div style="position:absolute;left:17px;top:439px;width:611px;height:1px;background:#bdbdbd;"></div>
<div style="position:absolute;left:33px;top:422px;width:1px;height:17px;background:#9c9c9c;"></div>
<div style="position:absolute;left:83px;top:422px;width:1px;height:17px;background:#cbcbcb;"></div>
<div style="position:absolute;left:193px;top:422px;width:1px;height:17px;background:#cbcbcb;"></div>
<div style="position:absolute;left:253px;top:422px;width:1px;height:17px;background:#cbcbcb;"></div>
<div style="position:absolute;left:355px;top:422px;width:1px;height:17px;background:#cbcbcb;"></div>
<div style="position:absolute;left:437px;top:422px;width:1px;height:17px;background:#cbcbcb;"></div>
<div style="position:absolute;left:494px;top:422px;width:1px;height:17px;background:#cbcbcb;"></div>
<div style="position:absolute;left:587px;top:422px;width:1px;height:17px;background:#cbcbcb;"></div>
<div style="position:absolute;left:17px;top:440px;width:16px;height:17px;background:linear-gradient(90deg,#f7f7f7,#eeeeee);"></div>
<div style="position:absolute;left:34px;top:440px;width:49px;height:17px;background:#e3e3e3;"></div>
<div class="t tr" style="left:34px;top:440px;width:47px;height:17px;line-height:18px;color:#353535"><i>483<b class="cm">,</b>33</i></div>
<div style="position:absolute;left:84px;top:440px;width:109px;height:17px;background:#e3e3e3;"></div>
<div class="t" style="left:87px;top:440px;width:106px;height:17px;line-height:18px;color:#353535"><i>1</i></div>
<div style="position:absolute;left:194px;top:440px;width:59px;height:17px;background:#e3e3e3;"></div>
<div class="t" style="left:197px;top:440px;width:56px;height:17px;line-height:18px;color:#353535"><i>05<b class="sl">/</b>03<b class="sl">/</b>202</i></div>
<div style="position:absolute;left:254px;top:440px;width:101px;height:17px;background:#e3e3e3;"></div>
<div class="t" style="left:257px;top:440px;width:98px;height:17px;line-height:18px;color:#353535"><i>25<b class="sl">/</b>10<b class="sl">/</b>2024</i></div>
<div style="position:absolute;left:356px;top:440px;width:81px;height:17px;background:#e3e3e3;"></div>
<div style="position:absolute;left:438px;top:440px;width:56px;height:17px;background:#e3e3e3;"></div>
<div style="position:absolute;left:495px;top:440px;width:92px;height:17px;background:#fdfdfd;"></div>
<div class="t" style="left:498px;top:440px;width:89px;height:17px;line-height:18px;color:#353535"><i>12000040</i></div>
<div style="position:absolute;left:588px;top:440px;width:40px;height:17px;background:#e3e3e3;"></div>
<div class="t" style="left:591px;top:440px;width:37px;height:17px;line-height:18px;color:#353535"><i>100000013</i></div>
<div style="position:absolute;left:17px;top:457px;width:611px;height:1px;background:#bdbdbd;"></div>
<div style="position:absolute;left:33px;top:440px;width:1px;height:17px;background:#9c9c9c;"></div>
<div style="position:absolute;left:83px;top:440px;width:1px;height:17px;background:#cbcbcb;"></div>
<div style="position:absolute;left:193px;top:440px;width:1px;height:17px;background:#cbcbcb;"></div>
<div style="position:absolute;left:253px;top:440px;width:1px;height:17px;background:#cbcbcb;"></div>
<div style="position:absolute;left:355px;top:440px;width:1px;height:17px;background:#cbcbcb;"></div>
<div style="position:absolute;left:437px;top:440px;width:1px;height:17px;background:#cbcbcb;"></div>
<div style="position:absolute;left:494px;top:440px;width:1px;height:17px;background:#cbcbcb;"></div>
<div style="position:absolute;left:587px;top:440px;width:1px;height:17px;background:#cbcbcb;"></div>
<div style="position:absolute;left:17px;top:458px;width:16px;height:17px;background:linear-gradient(90deg,#f7f7f7,#eeeeee);"></div>
<div style="position:absolute;left:34px;top:458px;width:49px;height:17px;background:#e3e3e3;"></div>
<div class="t tr" style="left:34px;top:458px;width:47px;height:17px;line-height:18px;color:#353535"><i>5<b class="sp"> </b>168<b class="cm">,</b>75</i></div>
<div style="position:absolute;left:84px;top:458px;width:109px;height:17px;background:#e3e3e3;"></div>
<div class="t" style="left:87px;top:458px;width:106px;height:17px;line-height:18px;color:#353535"><i>6511</i></div>
<div style="position:absolute;left:194px;top:458px;width:59px;height:17px;background:#e3e3e3;"></div>
<div class="t" style="left:197px;top:458px;width:56px;height:17px;line-height:18px;color:#353535"><i>01<b class="sl">/</b>04<b class="sl">/</b>202</i></div>
<div style="position:absolute;left:254px;top:458px;width:101px;height:17px;background:#e3e3e3;"></div>
<div class="t" style="left:257px;top:458px;width:98px;height:17px;line-height:18px;color:#353535"><i>01<b class="sl">/</b>04<b class="sl">/</b>2025</i></div>
<div style="position:absolute;left:356px;top:458px;width:81px;height:17px;background:#e3e3e3;"></div>
<div style="position:absolute;left:438px;top:458px;width:56px;height:17px;background:#e3e3e3;"></div>
<div style="position:absolute;left:495px;top:458px;width:92px;height:17px;background:#fdfdfd;"></div>
<div class="t" style="left:498px;top:458px;width:89px;height:17px;line-height:18px;color:#353535"><i>12000262</i></div>
<div style="position:absolute;left:588px;top:458px;width:40px;height:17px;background:#e3e3e3;"></div>
<div class="t" style="left:591px;top:458px;width:37px;height:17px;line-height:18px;color:#353535"><i>600000002</i></div>
<div style="position:absolute;left:17px;top:475px;width:611px;height:1px;background:#bdbdbd;"></div>
<div style="position:absolute;left:33px;top:458px;width:1px;height:17px;background:#9c9c9c;"></div>
<div style="position:absolute;left:83px;top:458px;width:1px;height:17px;background:#cbcbcb;"></div>
<div style="position:absolute;left:193px;top:458px;width:1px;height:17px;background:#cbcbcb;"></div>
<div style="position:absolute;left:253px;top:458px;width:1px;height:17px;background:#cbcbcb;"></div>
<div style="position:absolute;left:355px;top:458px;width:1px;height:17px;background:#cbcbcb;"></div>
<div style="position:absolute;left:437px;top:458px;width:1px;height:17px;background:#cbcbcb;"></div>
<div style="position:absolute;left:494px;top:458px;width:1px;height:17px;background:#cbcbcb;"></div>
<div style="position:absolute;left:587px;top:458px;width:1px;height:17px;background:#cbcbcb;"></div>
<div style="position:absolute;left:17px;top:476px;width:16px;height:17px;background:linear-gradient(90deg,#f7f7f7,#eeeeee);"></div>
<div style="position:absolute;left:34px;top:476px;width:49px;height:17px;background:#e3e3e3;"></div>
<div class="t tr" style="left:34px;top:476px;width:47px;height:17px;line-height:18px;color:#353535"><i>7<b class="sp"> </b>148<b class="cm">,</b>75</i></div>
<div style="position:absolute;left:84px;top:476px;width:109px;height:17px;background:#e3e3e3;"></div>
<div class="t" style="left:87px;top:476px;width:106px;height:17px;line-height:18px;color:#353535"><i>6535</i></div>
<div style="position:absolute;left:194px;top:476px;width:59px;height:17px;background:#e3e3e3;"></div>
<div class="t" style="left:197px;top:476px;width:56px;height:17px;line-height:18px;color:#353535"><i>01<b class="sl">/</b>04<b class="sl">/</b>202</i></div>
<div style="position:absolute;left:254px;top:476px;width:101px;height:17px;background:#e3e3e3;"></div>
<div class="t" style="left:257px;top:476px;width:98px;height:17px;line-height:18px;color:#353535"><i>01<b class="sl">/</b>04<b class="sl">/</b>2025</i></div>
<div style="position:absolute;left:356px;top:476px;width:81px;height:17px;background:#e3e3e3;"></div>
<div style="position:absolute;left:438px;top:476px;width:56px;height:17px;background:#e3e3e3;"></div>
<div style="position:absolute;left:495px;top:476px;width:92px;height:17px;background:#fdfdfd;"></div>
<div class="t" style="left:498px;top:476px;width:89px;height:17px;line-height:18px;color:#353535"><i>12000263</i></div>
<div style="position:absolute;left:588px;top:476px;width:40px;height:17px;background:#e3e3e3;"></div>
<div class="t" style="left:591px;top:476px;width:37px;height:17px;line-height:18px;color:#353535"><i>600000002</i></div>
<div style="position:absolute;left:17px;top:493px;width:611px;height:1px;background:#bdbdbd;"></div>
<div style="position:absolute;left:33px;top:476px;width:1px;height:17px;background:#9c9c9c;"></div>
<div style="position:absolute;left:83px;top:476px;width:1px;height:17px;background:#cbcbcb;"></div>
<div style="position:absolute;left:193px;top:476px;width:1px;height:17px;background:#cbcbcb;"></div>
<div style="position:absolute;left:253px;top:476px;width:1px;height:17px;background:#cbcbcb;"></div>
<div style="position:absolute;left:355px;top:476px;width:1px;height:17px;background:#cbcbcb;"></div>
<div style="position:absolute;left:437px;top:476px;width:1px;height:17px;background:#cbcbcb;"></div>
<div style="position:absolute;left:494px;top:476px;width:1px;height:17px;background:#cbcbcb;"></div>
<div style="position:absolute;left:587px;top:476px;width:1px;height:17px;background:#cbcbcb;"></div>
<div style="position:absolute;left:17px;top:494px;width:16px;height:17px;background:linear-gradient(90deg,#f7f7f7,#eeeeee);"></div>
<div style="position:absolute;left:34px;top:494px;width:49px;height:17px;background:#e3e3e3;"></div>
<div class="t tr" style="left:34px;top:494px;width:47px;height:17px;line-height:18px;color:#353535"><i>7<b class="sp"> </b>148<b class="cm">,</b>75</i></div>
<div style="position:absolute;left:84px;top:494px;width:109px;height:17px;background:#e3e3e3;"></div>
<div class="t" style="left:87px;top:494px;width:106px;height:17px;line-height:18px;color:#353535"><i>6535</i></div>
<div style="position:absolute;left:194px;top:494px;width:59px;height:17px;background:#e3e3e3;"></div>
<div class="t" style="left:197px;top:494px;width:56px;height:17px;line-height:18px;color:#353535"><i>01<b class="sl">/</b>04<b class="sl">/</b>202</i></div>
<div style="position:absolute;left:254px;top:494px;width:101px;height:17px;background:#e3e3e3;"></div>
<div class="t" style="left:257px;top:494px;width:98px;height:17px;line-height:18px;color:#353535"><i>01<b class="sl">/</b>04<b class="sl">/</b>2025</i></div>
<div style="position:absolute;left:356px;top:494px;width:81px;height:17px;background:#e3e3e3;"></div>
<div style="position:absolute;left:438px;top:494px;width:56px;height:17px;background:#e3e3e3;"></div>
<div style="position:absolute;left:495px;top:494px;width:92px;height:17px;background:#fdfdfd;"></div>
<div class="t" style="left:498px;top:494px;width:89px;height:17px;line-height:18px;color:#353535"><i>12000264</i></div>
<div style="position:absolute;left:588px;top:494px;width:40px;height:17px;background:#e3e3e3;"></div>
<div class="t" style="left:591px;top:494px;width:37px;height:17px;line-height:18px;color:#353535"><i>600000002</i></div>
<div style="position:absolute;left:17px;top:511px;width:611px;height:1px;background:#bdbdbd;"></div>
<div style="position:absolute;left:33px;top:494px;width:1px;height:17px;background:#9c9c9c;"></div>
<div style="position:absolute;left:83px;top:494px;width:1px;height:17px;background:#cbcbcb;"></div>
<div style="position:absolute;left:193px;top:494px;width:1px;height:17px;background:#cbcbcb;"></div>
<div style="position:absolute;left:253px;top:494px;width:1px;height:17px;background:#cbcbcb;"></div>
<div style="position:absolute;left:355px;top:494px;width:1px;height:17px;background:#cbcbcb;"></div>
<div style="position:absolute;left:437px;top:494px;width:1px;height:17px;background:#cbcbcb;"></div>
<div style="position:absolute;left:494px;top:494px;width:1px;height:17px;background:#cbcbcb;"></div>
<div style="position:absolute;left:587px;top:494px;width:1px;height:17px;background:#cbcbcb;"></div>
<div style="position:absolute;left:17px;top:512px;width:16px;height:17px;background:linear-gradient(90deg,#f7f7f7,#eeeeee);"></div>
<div style="position:absolute;left:34px;top:512px;width:49px;height:17px;background:#e3e3e3;"></div>
<div class="t tr" style="left:34px;top:512px;width:47px;height:17px;line-height:18px;color:#353535"><i>5<b class="sp"> </b>818<b class="cm">,</b>75</i></div>
<div style="position:absolute;left:84px;top:512px;width:109px;height:17px;background:#e3e3e3;"></div>
<div class="t" style="left:87px;top:512px;width:106px;height:17px;line-height:18px;color:#353535"><i>6535</i></div>
<div style="position:absolute;left:194px;top:512px;width:59px;height:17px;background:#e3e3e3;"></div>
<div class="t" style="left:197px;top:512px;width:56px;height:17px;line-height:18px;color:#353535"><i>01<b class="sl">/</b>04<b class="sl">/</b>202</i></div>
<div style="position:absolute;left:254px;top:512px;width:101px;height:17px;background:#e3e3e3;"></div>
<div class="t" style="left:257px;top:512px;width:98px;height:17px;line-height:18px;color:#353535"><i>01<b class="sl">/</b>04<b class="sl">/</b>2025</i></div>
<div style="position:absolute;left:356px;top:512px;width:81px;height:17px;background:#e3e3e3;"></div>
<div style="position:absolute;left:438px;top:512px;width:56px;height:17px;background:#e3e3e3;"></div>
<div style="position:absolute;left:495px;top:512px;width:92px;height:17px;background:#fdfdfd;"></div>
<div class="t" style="left:498px;top:512px;width:89px;height:17px;line-height:18px;color:#353535"><i>12000265</i></div>
<div style="position:absolute;left:588px;top:512px;width:40px;height:17px;background:#e3e3e3;"></div>
<div class="t" style="left:591px;top:512px;width:37px;height:17px;line-height:18px;color:#353535"><i>600000002</i></div>
<div style="position:absolute;left:17px;top:529px;width:611px;height:1px;background:#bdbdbd;"></div>
<div style="position:absolute;left:33px;top:512px;width:1px;height:17px;background:#9c9c9c;"></div>
<div style="position:absolute;left:83px;top:512px;width:1px;height:17px;background:#cbcbcb;"></div>
<div style="position:absolute;left:193px;top:512px;width:1px;height:17px;background:#cbcbcb;"></div>
<div style="position:absolute;left:253px;top:512px;width:1px;height:17px;background:#cbcbcb;"></div>
<div style="position:absolute;left:355px;top:512px;width:1px;height:17px;background:#cbcbcb;"></div>
<div style="position:absolute;left:437px;top:512px;width:1px;height:17px;background:#cbcbcb;"></div>
<div style="position:absolute;left:494px;top:512px;width:1px;height:17px;background:#cbcbcb;"></div>
<div style="position:absolute;left:587px;top:512px;width:1px;height:17px;background:#cbcbcb;"></div>
<div style="position:absolute;left:17px;top:530px;width:16px;height:4px;background:linear-gradient(90deg,#f7f7f7,#eeeeee);"></div>
<div style="position:absolute;left:34px;top:530px;width:49px;height:4px;background:#e3e3e3;"></div>
<div style="position:absolute;left:84px;top:530px;width:109px;height:4px;background:#e3e3e3;"></div>
<div style="position:absolute;left:194px;top:530px;width:59px;height:4px;background:#e3e3e3;"></div>
<div style="position:absolute;left:254px;top:530px;width:101px;height:4px;background:#e3e3e3;"></div>
<div style="position:absolute;left:356px;top:530px;width:81px;height:4px;background:#e3e3e3;"></div>
<div style="position:absolute;left:438px;top:530px;width:56px;height:4px;background:#e3e3e3;"></div>
<div style="position:absolute;left:495px;top:530px;width:92px;height:4px;background:#fdfdfd;"></div>
<div style="position:absolute;left:588px;top:530px;width:40px;height:4px;background:#e3e3e3;"></div>
<div style="position:absolute;left:33px;top:530px;width:1px;height:4px;background:#9c9c9c;"></div>
<div style="position:absolute;left:83px;top:530px;width:1px;height:4px;background:#cbcbcb;"></div>
<div style="position:absolute;left:193px;top:530px;width:1px;height:4px;background:#cbcbcb;"></div>
<div style="position:absolute;left:253px;top:530px;width:1px;height:4px;background:#cbcbcb;"></div>
<div style="position:absolute;left:355px;top:530px;width:1px;height:4px;background:#cbcbcb;"></div>
<div style="position:absolute;left:437px;top:530px;width:1px;height:4px;background:#cbcbcb;"></div>
<div style="position:absolute;left:494px;top:530px;width:1px;height:4px;background:#cbcbcb;"></div>
<div style="position:absolute;left:587px;top:530px;width:1px;height:4px;background:#cbcbcb;"></div>
<div style="position:absolute;left:628px;top:331px;width:18px;height:221px;background:#f0f0f0;"></div>
<div style="position:absolute;left:630px;top:350px;width:14px;height:107px;background:#cdcdcd;"></div>
<div style="position:absolute;left:632px;top:338px;line-height:0"><svg width="10" height="6" viewBox="0 0 10 6"><path d="M1 5 L5 1.3 L9 5" fill="none" stroke="#606060" stroke-width="2.2"/></svg></div>
<div style="position:absolute;left:632px;top:522px;line-height:0"><svg width="10" height="6" viewBox="0 0 10 6"><path d="M1 1 L5 4.7 L9 1" fill="none" stroke="#606060" stroke-width="2.2"/></svg></div>
<div style="position:absolute;left:17px;top:534px;width:611px;height:18px;background:#f0f0f0;"></div>
<div style="position:absolute;left:37px;top:535px;width:458px;height:15px;background:#cdcdcd;"></div>
<div style="position:absolute;left:24px;top:538px;line-height:0"><svg width="6" height="10" viewBox="0 0 6 10"><path d="M5 1 L1.3 5 L5 9" fill="none" stroke="#606060" stroke-width="2.2"/></svg></div>
<div style="position:absolute;left:617px;top:538px;line-height:0"><svg width="6" height="10" viewBox="0 0 6 10"><path d="M1 1 L4.7 5 L1 9" fill="none" stroke="#606060" stroke-width="2.2"/></svg></div>
<div style="position:absolute;left:661px;top:313px;width:633px;height:242px;background:#ffffff;box-sizing:border-box;border-left:1px solid #d0d0d0;border-top:1px solid #d6d6d6;border-right:2px solid #a9a9a9;border-bottom:2px solid #a9a9a9;"></div>
<div style="position:absolute;left:662px;top:313px;width:630px;height:18px;background:linear-gradient(#c9d5e0,#bfccd8);"></div>
<div class="t ti" style="left:668px;top:314px;width:500px;height:17px;text-align:left;line-height:17px;color:#2e353c;line-height:19px"><i>Mes réservations avec date d&#x27;options dépassées [2]</i></div>
<div style="position:absolute;left:662px;top:331px;width:629px;height:18px;background:linear-gradient(#fbfbfb,#f1f1f1);"></div>
<div style="position:absolute;left:662px;top:349px;width:629px;height:1px;background:#b9b9b9;"></div>
<div style="position:absolute;left:678px;top:332px;width:1px;height:17px;background:#a8a8a8;"></div>
<div style="position:absolute;left:729px;top:332px;width:1px;height:17px;background:#c8c8c8;"></div>
<div style="position:absolute;left:839px;top:332px;width:1px;height:17px;background:#c8c8c8;"></div>
<div style="position:absolute;left:940px;top:332px;width:1px;height:17px;background:#c8c8c8;"></div>
<div style="position:absolute;left:1041px;top:332px;width:1px;height:17px;background:#c8c8c8;"></div>
<div style="position:absolute;left:1143px;top:332px;width:1px;height:17px;background:#c8c8c8;"></div>
<div style="position:absolute;left:1236px;top:332px;width:1px;height:17px;background:#c8c8c8;"></div>
<div class="t th" style="left:682px;top:331px;width:47px;height:18px;line-height:20px;color:#363636"><i>Total HT</i></div>
<div class="t th" style="left:733px;top:331px;width:106px;height:18px;line-height:20px;color:#363636"><i>Nb cols équivalents</i></div>
<div class="t th" style="left:843px;top:331px;width:97px;height:18px;line-height:20px;color:#363636"><i>Date cmd.</i></div>
<div class="t th" style="left:944px;top:331px;width:97px;height:18px;line-height:20px;color:#363636"><i>Date exp. prév.</i></div>
<div class="t th" style="left:1045px;top:331px;width:98px;height:18px;line-height:20px;color:#363636"><i>Date éch.</i></div>
<div class="t th" style="left:1147px;top:331px;width:89px;height:18px;line-height:20px;color:#363636"><i>N° Commande</i></div>
<div class="t th" style="left:1240px;top:331px;width:51px;height:18px;line-height:20px;color:#363636"><i>Code tiers</i></div>
<div style="position:absolute;left:662px;top:350px;width:16px;height:17px;background:linear-gradient(90deg,#f7f7f7,#eeeeee);"></div>
<div style="position:absolute;left:668px;top:353px;width:0;height:0;border-top:5.5px solid transparent;border-bottom:5.5px solid transparent;border-left:6px solid #0a0a0a"></div>
<div style="position:absolute;left:679px;top:350px;width:50px;height:17px;background:linear-gradient(90deg,#fbfbe6,#fcfcd8);"></div>
<div class="t tr" style="left:679px;top:350px;width:48px;height:17px;line-height:18px;color:#a8402a"><i>0<b class="cm">,</b>00</i></div>
<div style="position:absolute;left:730px;top:350px;width:109px;height:17px;background:#e3e3e3;"></div>
<div style="position:absolute;left:840px;top:350px;width:100px;height:17px;background:#e3e3e3;"></div>
<div class="t" style="left:843px;top:350px;width:97px;height:17px;line-height:18px;color:#353535"><i>09<b class="sl">/</b>09<b class="sl">/</b>2024</i></div>
<div style="position:absolute;left:941px;top:350px;width:100px;height:17px;background:#e3e3e3;"></div>
<div class="t" style="left:944px;top:350px;width:97px;height:17px;line-height:18px;color:#353535"><i>09<b class="sl">/</b>09<b class="sl">/</b>2024</i></div>
<div style="position:absolute;left:1042px;top:350px;width:101px;height:17px;background:#e3e3e3;"></div>
<div style="position:absolute;left:1144px;top:350px;width:92px;height:17px;background:#fdfdfd;"></div>
<div class="t" style="left:1147px;top:350px;width:89px;height:17px;line-height:18px;color:#353535"><i>12000162</i></div>
<div style="position:absolute;left:1237px;top:350px;width:54px;height:17px;background:#e3e3e3;"></div>
<div class="t" style="left:1240px;top:350px;width:51px;height:17px;line-height:18px;color:#353535"><i>100000023</i></div>
<div style="position:absolute;left:662px;top:367px;width:629px;height:1px;background:#bdbdbd;"></div>
<div style="position:absolute;left:678px;top:350px;width:1px;height:17px;background:#9c9c9c;"></div>
<div style="position:absolute;left:729px;top:350px;width:1px;height:17px;background:#cbcbcb;"></div>
<div style="position:absolute;left:839px;top:350px;width:1px;height:17px;background:#cbcbcb;"></div>
<div style="position:absolute;left:940px;top:350px;width:1px;height:17px;background:#cbcbcb;"></div>
<div style="position:absolute;left:1041px;top:350px;width:1px;height:17px;background:#cbcbcb;"></div>
<div style="position:absolute;left:1143px;top:350px;width:1px;height:17px;background:#cbcbcb;"></div>
<div style="position:absolute;left:1236px;top:350px;width:1px;height:17px;background:#cbcbcb;"></div>
<div style="position:absolute;left:1291px;top:350px;width:1px;height:18px;background:#cbcbcb;"></div>
<div style="position:absolute;left:662px;top:368px;width:16px;height:17px;background:linear-gradient(90deg,#f7f7f7,#eeeeee);"></div>
<div style="position:absolute;left:679px;top:368px;width:50px;height:17px;background:#e3e3e3;"></div>
<div class="t tr" style="left:679px;top:368px;width:48px;height:17px;line-height:18px;color:#353535"><i>0<b class="cm">,</b>00</i></div>
<div style="position:absolute;left:730px;top:368px;width:109px;height:17px;background:#e3e3e3;"></div>
<div class="t" style="left:733px;top:368px;width:106px;height:17px;line-height:18px;color:#353535"><i>0</i></div>
<div style="position:absolute;left:840px;top:368px;width:100px;height:17px;background:#e3e3e3;"></div>
<div class="t" style="left:843px;top:368px;width:97px;height:17px;line-height:18px;color:#353535"><i>24<b class="sl">/</b>09<b class="sl">/</b>2024</i></div>
<div style="position:absolute;left:941px;top:368px;width:100px;height:17px;background:#e3e3e3;"></div>
<div class="t" style="left:944px;top:368px;width:97px;height:17px;line-height:18px;color:#353535"><i>24<b class="sl">/</b>09<b class="sl">/</b>2024</i></div>
<div style="position:absolute;left:1042px;top:368px;width:101px;height:17px;background:#e3e3e3;"></div>
<div style="position:absolute;left:1144px;top:368px;width:92px;height:17px;background:#fdfdfd;"></div>
<div class="t" style="left:1147px;top:368px;width:89px;height:17px;line-height:18px;color:#353535"><i>12000178</i></div>
<div style="position:absolute;left:1237px;top:368px;width:54px;height:17px;background:#e3e3e3;"></div>
<div class="t" style="left:1240px;top:368px;width:51px;height:17px;line-height:18px;color:#353535"><i>100000016</i></div>
<div style="position:absolute;left:662px;top:385px;width:629px;height:1px;background:#bdbdbd;"></div>
<div style="position:absolute;left:678px;top:368px;width:1px;height:17px;background:#9c9c9c;"></div>
<div style="position:absolute;left:729px;top:368px;width:1px;height:17px;background:#cbcbcb;"></div>
<div style="position:absolute;left:839px;top:368px;width:1px;height:17px;background:#cbcbcb;"></div>
<div style="position:absolute;left:940px;top:368px;width:1px;height:17px;background:#cbcbcb;"></div>
<div style="position:absolute;left:1041px;top:368px;width:1px;height:17px;background:#cbcbcb;"></div>
<div style="position:absolute;left:1143px;top:368px;width:1px;height:17px;background:#cbcbcb;"></div>
<div style="position:absolute;left:1236px;top:368px;width:1px;height:17px;background:#cbcbcb;"></div>
<div style="position:absolute;left:1291px;top:368px;width:1px;height:18px;background:#cbcbcb;"></div>
<div style="position:absolute;left:662px;top:386px;width:16px;height:17px;background:linear-gradient(90deg,#f7f7f7,#eeeeee);"></div>
<div style="position:absolute;left:679px;top:386px;width:50px;height:17px;background:#fdfdfd;"></div>
<div style="position:absolute;left:730px;top:386px;width:109px;height:17px;background:#fdfdfd;"></div>
<div style="position:absolute;left:840px;top:386px;width:100px;height:17px;background:#fdfdfd;"></div>
<div style="position:absolute;left:941px;top:386px;width:100px;height:17px;background:#fdfdfd;"></div>
<div style="position:absolute;left:1042px;top:386px;width:101px;height:17px;background:#fdfdfd;"></div>
<div style="position:absolute;left:1144px;top:386px;width:92px;height:17px;background:#fdfdfd;"></div>
<div style="position:absolute;left:1237px;top:386px;width:54px;height:17px;background:#fdfdfd;"></div>
<div style="position:absolute;left:662px;top:403px;width:629px;height:1px;background:#bdbdbd;"></div>
<div style="position:absolute;left:678px;top:386px;width:1px;height:17px;background:#9c9c9c;"></div>
<div style="position:absolute;left:729px;top:386px;width:1px;height:17px;background:#cbcbcb;"></div>
<div style="position:absolute;left:839px;top:386px;width:1px;height:17px;background:#cbcbcb;"></div>
<div style="position:absolute;left:940px;top:386px;width:1px;height:17px;background:#cbcbcb;"></div>
<div style="position:absolute;left:1041px;top:386px;width:1px;height:17px;background:#cbcbcb;"></div>
<div style="position:absolute;left:1143px;top:386px;width:1px;height:17px;background:#cbcbcb;"></div>
<div style="position:absolute;left:1236px;top:386px;width:1px;height:17px;background:#cbcbcb;"></div>
<div style="position:absolute;left:1291px;top:386px;width:1px;height:18px;background:#cbcbcb;"></div>
<div style="position:absolute;left:1291px;top:332px;width:1px;height:17px;background:#c8c8c8;"></div>
<div style="position:absolute;left:662px;top:534px;width:630px;height:18px;background:#f0f0f0;"></div>
<div style="position:absolute;left:681px;top:535px;width:469px;height:15px;background:#cdcdcd;"></div>
<div style="position:absolute;left:669px;top:538px;line-height:0"><svg width="6" height="10" viewBox="0 0 6 10"><path d="M5 1 L1.3 5 L5 9" fill="none" stroke="#606060" stroke-width="2.2"/></svg></div>
<div style="position:absolute;left:1279px;top:538px;line-height:0"><svg width="6" height="10" viewBox="0 0 6 10"><path d="M1 1 L4.7 5 L1 9" fill="none" stroke="#606060" stroke-width="2.2"/></svg></div>
<div style="position:absolute;left:1306px;top:313px;width:633px;height:242px;background:#ffffff;box-sizing:border-box;border-left:1px solid #d0d0d0;border-top:1px solid #d6d6d6;border-right:2px solid #a9a9a9;border-bottom:2px solid #a9a9a9;"></div>
<div style="position:absolute;left:1307px;top:313px;width:630px;height:18px;background:linear-gradient(#c9d5e0,#bfccd8);"></div>
<div class="t ti" style="left:1313px;top:314px;width:500px;height:17px;text-align:left;line-height:17px;color:#2e353c;line-height:19px"><i>Mes Commandes en attente de facturation  [5]</i></div>
<div style="position:absolute;left:1307px;top:331px;width:595px;height:18px;background:linear-gradient(#fbfbfb,#f1f1f1);"></div>
<div style="position:absolute;left:1307px;top:349px;width:595px;height:1px;background:#b9b9b9;"></div>
<div style="position:absolute;left:1323px;top:332px;width:1px;height:17px;background:#a8a8a8;"></div>
<div style="position:absolute;left:1388px;top:332px;width:1px;height:17px;background:#c8c8c8;"></div>
<div style="position:absolute;left:1439px;top:332px;width:1px;height:17px;background:#c8c8c8;"></div>
<div style="position:absolute;left:1549px;top:332px;width:1px;height:17px;background:#c8c8c8;"></div>
<div style="position:absolute;left:1650px;top:332px;width:1px;height:17px;background:#c8c8c8;"></div>
<div style="position:absolute;left:1752px;top:332px;width:1px;height:17px;background:#c8c8c8;"></div>
<div style="position:absolute;left:1809px;top:332px;width:1px;height:17px;background:#c8c8c8;"></div>
<div class="t th" style="left:1327px;top:331px;width:61px;height:18px;line-height:20px;color:#363636"><i>Code tiers</i></div>
<div class="t th" style="left:1392px;top:331px;width:47px;height:18px;line-height:20px;color:#363636"><i>Total HT</i></div>
<div class="t th" style="left:1443px;top:331px;width:106px;height:18px;line-height:20px;color:#363636"><i>Nb cols équivalents</i></div>
<div class="t th" style="left:1553px;top:331px;width:97px;height:18px;line-height:20px;color:#363636"><i>Date cmd.</i></div>
<div class="t th" style="left:1654px;top:331px;width:98px;height:18px;line-height:20px;color:#363636"><i>Date fin option</i></div>
<div class="t th" style="left:1756px;top:331px;width:53px;height:18px;line-height:20px;color:#363636"><i>Date éch.</i></div>
<div class="t th" style="left:1813px;top:331px;width:89px;height:18px;line-height:20px;color:#363636"><i>N° Commande</i></div>
<div style="position:absolute;left:1307px;top:350px;width:16px;height:17px;background:linear-gradient(90deg,#f7f7f7,#eeeeee);"></div>
<div style="position:absolute;left:1313px;top:353px;width:0;height:0;border-top:5.5px solid transparent;border-bottom:5.5px solid transparent;border-left:6px solid #0a0a0a"></div>
<div style="position:absolute;left:1324px;top:350px;width:64px;height:17px;background:linear-gradient(90deg,#fbfbe6,#fcfcd8);"></div>
<div class="t" style="left:1327px;top:350px;width:61px;height:17px;line-height:18px;color:#a8402a"><i>100000017</i></div>
<div style="position:absolute;left:1389px;top:350px;width:50px;height:17px;background:#e3e3e3;"></div>
<div class="t tr" style="left:1389px;top:350px;width:48px;height:17px;line-height:18px;color:#353535"><i>466<b class="cm">,</b>00</i></div>
<div style="position:absolute;left:1440px;top:350px;width:109px;height:17px;background:#e3e3e3;"></div>
<div class="t" style="left:1443px;top:350px;width:106px;height:17px;line-height:18px;color:#353535"><i>25</i></div>
<div style="position:absolute;left:1550px;top:350px;width:100px;height:17px;background:#e3e3e3;"></div>
<div class="t" style="left:1553px;top:350px;width:97px;height:17px;line-height:18px;color:#353535"><i>23<b class="sl">/</b>03<b class="sl">/</b>2024</i></div>
<div style="position:absolute;left:1651px;top:350px;width:101px;height:17px;background:#e3e3e3;"></div>
<div style="position:absolute;left:1753px;top:350px;width:56px;height:17px;background:#e3e3e3;"></div>
<div style="position:absolute;left:1810px;top:350px;width:92px;height:17px;background:#fdfdfd;"></div>
<div class="t" style="left:1813px;top:350px;width:89px;height:17px;line-height:18px;color:#353535"><i>12000054</i></div>
<div style="position:absolute;left:1307px;top:367px;width:595px;height:1px;background:#bdbdbd;"></div>
<div style="position:absolute;left:1323px;top:350px;width:1px;height:17px;background:#9c9c9c;"></div>
<div style="position:absolute;left:1388px;top:350px;width:1px;height:17px;background:#cbcbcb;"></div>
<div style="position:absolute;left:1439px;top:350px;width:1px;height:17px;background:#cbcbcb;"></div>
<div style="position:absolute;left:1549px;top:350px;width:1px;height:17px;background:#cbcbcb;"></div>
<div style="position:absolute;left:1650px;top:350px;width:1px;height:17px;background:#cbcbcb;"></div>
<div style="position:absolute;left:1752px;top:350px;width:1px;height:17px;background:#cbcbcb;"></div>
<div style="position:absolute;left:1809px;top:350px;width:1px;height:17px;background:#cbcbcb;"></div>
<div style="position:absolute;left:1902px;top:350px;width:1px;height:18px;background:#cbcbcb;"></div>
<div style="position:absolute;left:1307px;top:368px;width:16px;height:17px;background:linear-gradient(90deg,#f7f7f7,#eeeeee);"></div>
<div style="position:absolute;left:1324px;top:368px;width:64px;height:17px;background:#e3e3e3;"></div>
<div class="t" style="left:1327px;top:368px;width:61px;height:17px;line-height:18px;color:#353535"><i>100000017</i></div>
<div style="position:absolute;left:1389px;top:368px;width:50px;height:17px;background:#e3e3e3;"></div>
<div class="t tr" style="left:1389px;top:368px;width:48px;height:17px;line-height:18px;color:#353535"><i>7<b class="sp"> </b>734<b class="cm">,</b>00</i></div>
<div style="position:absolute;left:1440px;top:368px;width:109px;height:17px;background:#e3e3e3;"></div>
<div class="t" style="left:1443px;top:368px;width:106px;height:17px;line-height:18px;color:#353535"><i>300</i></div>
<div style="position:absolute;left:1550px;top:368px;width:100px;height:17px;background:#e3e3e3;"></div>
<div class="t" style="left:1553px;top:368px;width:97px;height:17px;line-height:18px;color:#353535"><i>29<b class="sl">/</b>03<b class="sl">/</b>2024</i></div>
<div style="position:absolute;left:1651px;top:368px;width:101px;height:17px;background:#e3e3e3;"></div>
<div style="position:absolute;left:1753px;top:368px;width:56px;height:17px;background:#e3e3e3;"></div>
<div style="position:absolute;left:1810px;top:368px;width:92px;height:17px;background:#fdfdfd;"></div>
<div class="t" style="left:1813px;top:368px;width:89px;height:17px;line-height:18px;color:#353535"><i>12000060</i></div>
<div style="position:absolute;left:1307px;top:385px;width:595px;height:1px;background:#bdbdbd;"></div>
<div style="position:absolute;left:1323px;top:368px;width:1px;height:17px;background:#9c9c9c;"></div>
<div style="position:absolute;left:1388px;top:368px;width:1px;height:17px;background:#cbcbcb;"></div>
<div style="position:absolute;left:1439px;top:368px;width:1px;height:17px;background:#cbcbcb;"></div>
<div style="position:absolute;left:1549px;top:368px;width:1px;height:17px;background:#cbcbcb;"></div>
<div style="position:absolute;left:1650px;top:368px;width:1px;height:17px;background:#cbcbcb;"></div>
<div style="position:absolute;left:1752px;top:368px;width:1px;height:17px;background:#cbcbcb;"></div>
<div style="position:absolute;left:1809px;top:368px;width:1px;height:17px;background:#cbcbcb;"></div>
<div style="position:absolute;left:1902px;top:368px;width:1px;height:18px;background:#cbcbcb;"></div>
<div style="position:absolute;left:1307px;top:386px;width:16px;height:17px;background:linear-gradient(90deg,#f7f7f7,#eeeeee);"></div>
<div style="position:absolute;left:1324px;top:386px;width:64px;height:17px;background:#e3e3e3;"></div>
<div class="t" style="left:1327px;top:386px;width:61px;height:17px;line-height:18px;color:#353535"><i>100000032</i></div>
<div style="position:absolute;left:1389px;top:386px;width:50px;height:17px;background:#e3e3e3;"></div>
<div class="t tr" style="left:1389px;top:386px;width:48px;height:17px;line-height:18px;color:#353535"><i>300<b class="cm">,</b>00</i></div>
<div style="position:absolute;left:1440px;top:386px;width:109px;height:17px;background:#e3e3e3;"></div>
<div class="t" style="left:1443px;top:386px;width:106px;height:17px;line-height:18px;color:#353535"><i>30</i></div>
<div style="position:absolute;left:1550px;top:386px;width:100px;height:17px;background:#e3e3e3;"></div>
<div class="t" style="left:1553px;top:386px;width:97px;height:17px;line-height:18px;color:#353535"><i>30<b class="sl">/</b>09<b class="sl">/</b>2024</i></div>
<div style="position:absolute;left:1651px;top:386px;width:101px;height:17px;background:#e3e3e3;"></div>
<div style="position:absolute;left:1753px;top:386px;width:56px;height:17px;background:#e3e3e3;"></div>
<div style="position:absolute;left:1810px;top:386px;width:92px;height:17px;background:#fdfdfd;"></div>
<div class="t" style="left:1813px;top:386px;width:89px;height:17px;line-height:18px;color:#353535"><i>12000180</i></div>
<div style="position:absolute;left:1307px;top:403px;width:595px;height:1px;background:#bdbdbd;"></div>
<div style="position:absolute;left:1323px;top:386px;width:1px;height:17px;background:#9c9c9c;"></div>
<div style="position:absolute;left:1388px;top:386px;width:1px;height:17px;background:#cbcbcb;"></div>
<div style="position:absolute;left:1439px;top:386px;width:1px;height:17px;background:#cbcbcb;"></div>
<div style="position:absolute;left:1549px;top:386px;width:1px;height:17px;background:#cbcbcb;"></div>
<div style="position:absolute;left:1650px;top:386px;width:1px;height:17px;background:#cbcbcb;"></div>
<div style="position:absolute;left:1752px;top:386px;width:1px;height:17px;background:#cbcbcb;"></div>
<div style="position:absolute;left:1809px;top:386px;width:1px;height:17px;background:#cbcbcb;"></div>
<div style="position:absolute;left:1902px;top:386px;width:1px;height:18px;background:#cbcbcb;"></div>
<div style="position:absolute;left:1307px;top:404px;width:16px;height:17px;background:linear-gradient(90deg,#f7f7f7,#eeeeee);"></div>
<div style="position:absolute;left:1324px;top:404px;width:64px;height:17px;background:#e3e3e3;"></div>
<div class="t" style="left:1327px;top:404px;width:61px;height:17px;line-height:18px;color:#353535"><i>100000015</i></div>
<div style="position:absolute;left:1389px;top:404px;width:50px;height:17px;background:#e3e3e3;"></div>
<div class="t tr" style="left:1389px;top:404px;width:48px;height:17px;line-height:18px;color:#353535"><i>2<b class="sp"> </b>825<b class="cm">,</b>00</i></div>
<div style="position:absolute;left:1440px;top:404px;width:109px;height:17px;background:#e3e3e3;"></div>
<div class="t" style="left:1443px;top:404px;width:106px;height:17px;line-height:18px;color:#353535"><i>12666</i></div>
<div style="position:absolute;left:1550px;top:404px;width:100px;height:17px;background:#e3e3e3;"></div>
<div class="t" style="left:1553px;top:404px;width:97px;height:17px;line-height:18px;color:#353535"><i>04<b class="sl">/</b>12<b class="sl">/</b>2024</i></div>
<div style="position:absolute;left:1651px;top:404px;width:101px;height:17px;background:#e3e3e3;"></div>
<div style="position:absolute;left:1753px;top:404px;width:56px;height:17px;background:#e3e3e3;"></div>
<div style="position:absolute;left:1810px;top:404px;width:92px;height:17px;background:#fdfdfd;"></div>
<div class="t" style="left:1813px;top:404px;width:89px;height:17px;line-height:18px;color:#353535"><i>12000238</i></div>
<div style="position:absolute;left:1307px;top:421px;width:595px;height:1px;background:#bdbdbd;"></div>
<div style="position:absolute;left:1323px;top:404px;width:1px;height:17px;background:#9c9c9c;"></div>
<div style="position:absolute;left:1388px;top:404px;width:1px;height:17px;background:#cbcbcb;"></div>
<div style="position:absolute;left:1439px;top:404px;width:1px;height:17px;background:#cbcbcb;"></div>
<div style="position:absolute;left:1549px;top:404px;width:1px;height:17px;background:#cbcbcb;"></div>
<div style="position:absolute;left:1650px;top:404px;width:1px;height:17px;background:#cbcbcb;"></div>
<div style="position:absolute;left:1752px;top:404px;width:1px;height:17px;background:#cbcbcb;"></div>
<div style="position:absolute;left:1809px;top:404px;width:1px;height:17px;background:#cbcbcb;"></div>
<div style="position:absolute;left:1902px;top:404px;width:1px;height:18px;background:#cbcbcb;"></div>
<div style="position:absolute;left:1307px;top:422px;width:16px;height:17px;background:linear-gradient(90deg,#f7f7f7,#eeeeee);"></div>
<div style="position:absolute;left:1324px;top:422px;width:64px;height:17px;background:#e3e3e3;"></div>
<div class="t" style="left:1327px;top:422px;width:61px;height:17px;line-height:18px;color:#353535"><i>100000015</i></div>
<div style="position:absolute;left:1389px;top:422px;width:50px;height:17px;background:#e3e3e3;"></div>
<div class="t tr" style="left:1389px;top:422px;width:48px;height:17px;line-height:18px;color:#353535"><i>10<b class="sp"> </b>250<b class="cm">,</b>00</i></div>
<div style="position:absolute;left:1440px;top:422px;width:109px;height:17px;background:#e3e3e3;"></div>
<div class="t" style="left:1443px;top:422px;width:106px;height:17px;line-height:18px;color:#353535"><i>20000</i></div>
<div style="position:absolute;left:1550px;top:422px;width:100px;height:17px;background:#e3e3e3;"></div>
<div class="t" style="left:1553px;top:422px;width:97px;height:17px;line-height:18px;color:#353535"><i>04<b class="sl">/</b>12<b class="sl">/</b>2024</i></div>
<div style="position:absolute;left:1651px;top:422px;width:101px;height:17px;background:#e3e3e3;"></div>
<div style="position:absolute;left:1753px;top:422px;width:56px;height:17px;background:#e3e3e3;"></div>
<div style="position:absolute;left:1810px;top:422px;width:92px;height:17px;background:#fdfdfd;"></div>
<div class="t" style="left:1813px;top:422px;width:89px;height:17px;line-height:18px;color:#353535"><i>12000239</i></div>
<div style="position:absolute;left:1307px;top:439px;width:595px;height:1px;background:#bdbdbd;"></div>
<div style="position:absolute;left:1323px;top:422px;width:1px;height:17px;background:#9c9c9c;"></div>
<div style="position:absolute;left:1388px;top:422px;width:1px;height:17px;background:#cbcbcb;"></div>
<div style="position:absolute;left:1439px;top:422px;width:1px;height:17px;background:#cbcbcb;"></div>
<div style="position:absolute;left:1549px;top:422px;width:1px;height:17px;background:#cbcbcb;"></div>
<div style="position:absolute;left:1650px;top:422px;width:1px;height:17px;background:#cbcbcb;"></div>
<div style="position:absolute;left:1752px;top:422px;width:1px;height:17px;background:#cbcbcb;"></div>
<div style="position:absolute;left:1809px;top:422px;width:1px;height:17px;background:#cbcbcb;"></div>
<div style="position:absolute;left:1902px;top:422px;width:1px;height:18px;background:#cbcbcb;"></div>
<div style="position:absolute;left:1307px;top:440px;width:16px;height:17px;background:linear-gradient(90deg,#f7f7f7,#eeeeee);"></div>
<div style="position:absolute;left:1324px;top:440px;width:64px;height:17px;background:#fdfdfd;"></div>
<div style="position:absolute;left:1389px;top:440px;width:50px;height:17px;background:#fdfdfd;"></div>
<div style="position:absolute;left:1440px;top:440px;width:109px;height:17px;background:#fdfdfd;"></div>
<div style="position:absolute;left:1550px;top:440px;width:100px;height:17px;background:#fdfdfd;"></div>
<div style="position:absolute;left:1651px;top:440px;width:101px;height:17px;background:#fdfdfd;"></div>
<div style="position:absolute;left:1753px;top:440px;width:56px;height:17px;background:#fdfdfd;"></div>
<div style="position:absolute;left:1810px;top:440px;width:92px;height:17px;background:#fdfdfd;"></div>
<div style="position:absolute;left:1307px;top:457px;width:595px;height:1px;background:#bdbdbd;"></div>
<div style="position:absolute;left:1323px;top:440px;width:1px;height:17px;background:#9c9c9c;"></div>
<div style="position:absolute;left:1388px;top:440px;width:1px;height:17px;background:#cbcbcb;"></div>
<div style="position:absolute;left:1439px;top:440px;width:1px;height:17px;background:#cbcbcb;"></div>
<div style="position:absolute;left:1549px;top:440px;width:1px;height:17px;background:#cbcbcb;"></div>
<div style="position:absolute;left:1650px;top:440px;width:1px;height:17px;background:#cbcbcb;"></div>
<div style="position:absolute;left:1752px;top:440px;width:1px;height:17px;background:#cbcbcb;"></div>
<div style="position:absolute;left:1809px;top:440px;width:1px;height:17px;background:#cbcbcb;"></div>
<div style="position:absolute;left:1902px;top:440px;width:1px;height:18px;background:#cbcbcb;"></div>
<div style="position:absolute;left:1902px;top:332px;width:1px;height:17px;background:#c8c8c8;"></div>
<div style="position:absolute;left:16px;top:566px;width:633px;height:242px;background:#ffffff;box-sizing:border-box;border-left:1px solid #d0d0d0;border-top:1px solid #d6d6d6;border-right:2px solid #a9a9a9;border-bottom:2px solid #a9a9a9;"></div>
<div style="position:absolute;left:17px;top:566px;width:630px;height:18px;background:linear-gradient(#c9d5e0,#bfccd8);"></div>
<div class="t ti" style="left:23px;top:567px;width:500px;height:17px;text-align:left;line-height:17px;color:#2e353c;line-height:19px"><i>Mes Commandes sans contact de facturation [43]</i></div>
<div style="position:absolute;left:17px;top:584px;width:611px;height:18px;background:linear-gradient(#fbfbfb,#f1f1f1);"></div>
<div style="position:absolute;left:17px;top:602px;width:611px;height:1px;background:#b9b9b9;"></div>
<div style="position:absolute;left:33px;top:585px;width:1px;height:17px;background:#a8a8a8;"></div>
<div style="position:absolute;left:83px;top:585px;width:1px;height:17px;background:#c8c8c8;"></div>
<div style="position:absolute;left:193px;top:585px;width:1px;height:17px;background:#c8c8c8;"></div>
<div style="position:absolute;left:253px;top:585px;width:1px;height:17px;background:#c8c8c8;"></div>
<div style="position:absolute;left:355px;top:585px;width:1px;height:17px;background:#c8c8c8;"></div>
<div style="position:absolute;left:411px;top:585px;width:1px;height:17px;background:#c8c8c8;"></div>
<div style="position:absolute;left:504px;top:585px;width:1px;height:17px;background:#c8c8c8;"></div>
<div class="t th" style="left:37px;top:584px;width:46px;height:18px;line-height:20px;color:#363636"><i>Total HT</i></div>
<div class="t th" style="left:87px;top:584px;width:106px;height:18px;line-height:20px;color:#363636"><i>Nb cols équivalents</i></div>
<div class="t th" style="left:197px;top:584px;width:56px;height:18px;line-height:20px;color:#363636"><i>Date cmd.</i></div>
<div class="t th" style="left:257px;top:584px;width:98px;height:18px;line-height:20px;color:#363636"><i>Date fin option</i></div>
<div class="t th" style="left:359px;top:584px;width:52px;height:18px;line-height:20px;color:#363636"><i>Date éch.</i></div>
<div class="t th" style="left:415px;top:584px;width:89px;height:18px;line-height:20px;color:#363636"><i>N° Commande</i></div>
<div class="t th" style="left:508px;top:584px;width:120px;height:18px;line-height:20px;color:#363636"><i>Code tiers</i></div>
<div style="position:absolute;left:17px;top:603px;width:16px;height:17px;background:linear-gradient(90deg,#f7f7f7,#eeeeee);"></div>
<div style="position:absolute;left:23px;top:606px;width:0;height:0;border-top:5.5px solid transparent;border-bottom:5.5px solid transparent;border-left:6px solid #0a0a0a"></div>
<div style="position:absolute;left:34px;top:603px;width:49px;height:17px;background:linear-gradient(90deg,#fbfbe6,#fcfcd8);"></div>
<div class="t tr" style="left:34px;top:603px;width:47px;height:17px;line-height:18px;color:#a8402a"><i>1<b class="sp"> </b>400<b class="cm">,</b>00</i></div>
<div style="position:absolute;left:84px;top:603px;width:109px;height:17px;background:#e3e3e3;"></div>
<div class="t" style="left:87px;top:603px;width:106px;height:17px;line-height:18px;color:#353535"><i>600</i></div>
<div style="position:absolute;left:194px;top:603px;width:59px;height:17px;background:#e3e3e3;"></div>
<div class="t" style="left:197px;top:603px;width:56px;height:17px;line-height:18px;color:#353535"><i>12<b class="sl">/</b>02<b class="sl">/</b>202</i></div>
<div style="position:absolute;left:254px;top:603px;width:101px;height:17px;background:#e3e3e3;"></div>
<div style="position:absolute;left:356px;top:603px;width:55px;height:17px;background:#e3e3e3;"></div>
<div style="position:absolute;left:412px;top:603px;width:92px;height:17px;background:#fdfdfd;"></div>
<div class="t" style="left:415px;top:603px;width:89px;height:17px;line-height:18px;color:#353535"><i>12000027</i></div>
<div style="position:absolute;left:505px;top:603px;width:123px;height:17px;background:#e3e3e3;"></div>
<div class="t" style="left:508px;top:603px;width:120px;height:17px;line-height:18px;color:#353535"><i>600000002</i></div>
<div style="position:absolute;left:17px;top:620px;width:611px;height:1px;background:#bdbdbd;"></div>
<div style="position:absolute;left:33px;top:603px;width:1px;height:17px;background:#9c9c9c;"></div>
<div style="position:absolute;left:83px;top:603px;width:1px;height:17px;background:#cbcbcb;"></div>
<div style="position:absolute;left:193px;top:603px;width:1px;height:17px;background:#cbcbcb;"></div>
<div style="position:absolute;left:253px;top:603px;width:1px;height:17px;background:#cbcbcb;"></div>
<div style="position:absolute;left:355px;top:603px;width:1px;height:17px;background:#cbcbcb;"></div>
<div style="position:absolute;left:411px;top:603px;width:1px;height:17px;background:#cbcbcb;"></div>
<div style="position:absolute;left:504px;top:603px;width:1px;height:17px;background:#cbcbcb;"></div>
<div style="position:absolute;left:17px;top:621px;width:16px;height:17px;background:linear-gradient(90deg,#f7f7f7,#eeeeee);"></div>
<div style="position:absolute;left:34px;top:621px;width:49px;height:17px;background:#e3e3e3;"></div>
<div class="t tr" style="left:34px;top:621px;width:47px;height:17px;line-height:18px;color:#353535"><i>625<b class="cm">,</b>00</i></div>
<div style="position:absolute;left:84px;top:621px;width:109px;height:17px;background:#e3e3e3;"></div>
<div class="t" style="left:87px;top:621px;width:106px;height:17px;line-height:18px;color:#353535"><i>6666</i></div>
<div style="position:absolute;left:194px;top:621px;width:59px;height:17px;background:#e3e3e3;"></div>
<div class="t" style="left:197px;top:621px;width:56px;height:17px;line-height:18px;color:#353535"><i>14<b class="sl">/</b>02<b class="sl">/</b>202</i></div>
<div style="position:absolute;left:254px;top:621px;width:101px;height:17px;background:#e3e3e3;"></div>
<div style="position:absolute;left:356px;top:621px;width:55px;height:17px;background:#e3e3e3;"></div>
<div class="t" style="left:359px;top:621px;width:52px;height:17px;line-height:18px;color:#353535"><i>15<b class="sl">/</b>12<b class="sl">/</b>202</i></div>
<div style="position:absolute;left:412px;top:621px;width:92px;height:17px;background:#fdfdfd;"></div>
<div class="t" style="left:415px;top:621px;width:89px;height:17px;line-height:18px;color:#353535"><i>12000030</i></div>
<div style="position:absolute;left:505px;top:621px;width:123px;height:17px;background:#e3e3e3;"></div>
<div class="t" style="left:508px;top:621px;width:120px;height:17px;line-height:18px;color:#353535"><i>600000002</i></div>
<div style="position:absolute;left:17px;top:638px;width:611px;height:1px;background:#bdbdbd;"></div>
<div style="position:absolute;left:33px;top:621px;width:1px;height:17px;background:#9c9c9c;"></div>
<div style="position:absolute;left:83px;top:621px;width:1px;height:17px;background:#cbcbcb;"></div>
<div style="position:absolute;left:193px;top:621px;width:1px;height:17px;background:#cbcbcb;"></div>
<div style="position:absolute;left:253px;top:621px;width:1px;height:17px;background:#cbcbcb;"></div>
<div style="position:absolute;left:355px;top:621px;width:1px;height:17px;background:#cbcbcb;"></div>
<div style="position:absolute;left:411px;top:621px;width:1px;height:17px;background:#cbcbcb;"></div>
<div style="position:absolute;left:504px;top:621px;width:1px;height:17px;background:#cbcbcb;"></div>
<div style="position:absolute;left:17px;top:639px;width:16px;height:17px;background:linear-gradient(90deg,#f7f7f7,#eeeeee);"></div>
<div style="position:absolute;left:34px;top:639px;width:49px;height:17px;background:#e3e3e3;"></div>
<div class="t tr" style="left:34px;top:639px;width:47px;height:17px;line-height:18px;color:#353535"><i>1<b class="sp"> </b>002<b class="cm">,</b>08</i></div>
<div style="position:absolute;left:84px;top:639px;width:109px;height:17px;background:#e3e3e3;"></div>
<div class="t" style="left:87px;top:639px;width:106px;height:17px;line-height:18px;color:#353535"><i>2</i></div>
<div style="position:absolute;left:194px;top:639px;width:59px;height:17px;background:#e3e3e3;"></div>
<div class="t" style="left:197px;top:639px;width:56px;height:17px;line-height:18px;color:#353535"><i>27<b class="sl">/</b>02<b class="sl">/</b>202</i></div>
<div style="position:absolute;left:254px;top:639px;width:101px;height:17px;background:#e3e3e3;"></div>
<div style="position:absolute;left:356px;top:639px;width:55px;height:17px;background:#e3e3e3;"></div>
<div style="position:absolute;left:412px;top:639px;width:92px;height:17px;background:#fdfdfd;"></div>
<div class="t" style="left:415px;top:639px;width:89px;height:17px;line-height:18px;color:#353535"><i>12000035</i></div>
<div style="position:absolute;left:505px;top:639px;width:123px;height:17px;background:#e3e3e3;"></div>
<div class="t" style="left:508px;top:639px;width:120px;height:17px;line-height:18px;color:#353535"><i>600000002</i></div>
<div style="position:absolute;left:17px;top:656px;width:611px;height:1px;background:#bdbdbd;"></div>
<div style="position:absolute;left:33px;top:639px;width:1px;height:17px;background:#9c9c9c;"></div>
<div style="position:absolute;left:83px;top:639px;width:1px;height:17px;background:#cbcbcb;"></div>
<div style="position:absolute;left:193px;top:639px;width:1px;height:17px;background:#cbcbcb;"></div>
<div style="position:absolute;left:253px;top:639px;width:1px;height:17px;background:#cbcbcb;"></div>
<div style="position:absolute;left:355px;top:639px;width:1px;height:17px;background:#cbcbcb;"></div>
<div style="position:absolute;left:411px;top:639px;width:1px;height:17px;background:#cbcbcb;"></div>
<div style="position:absolute;left:504px;top:639px;width:1px;height:17px;background:#cbcbcb;"></div>
<div style="position:absolute;left:17px;top:657px;width:16px;height:17px;background:linear-gradient(90deg,#f7f7f7,#eeeeee);"></div>
<div style="position:absolute;left:34px;top:657px;width:49px;height:17px;background:#e3e3e3;"></div>
<div class="t tr" style="left:34px;top:657px;width:47px;height:17px;line-height:18px;color:#353535"><i>98<b class="cm">,</b>40</i></div>
<div style="position:absolute;left:84px;top:657px;width:109px;height:17px;background:#e3e3e3;"></div>
<div class="t" style="left:87px;top:657px;width:106px;height:17px;line-height:18px;color:#353535"><i>1</i></div>
<div style="position:absolute;left:194px;top:657px;width:59px;height:17px;background:#e3e3e3;"></div>
<div class="t" style="left:197px;top:657px;width:56px;height:17px;line-height:18px;color:#353535"><i>05<b class="sl">/</b>03<b class="sl">/</b>202</i></div>
<div style="position:absolute;left:254px;top:657px;width:101px;height:17px;background:#e3e3e3;"></div>
<div style="position:absolute;left:356px;top:657px;width:55px;height:17px;background:#e3e3e3;"></div>
<div style="position:absolute;left:412px;top:657px;width:92px;height:17px;background:#fdfdfd;"></div>
<div class="t" style="left:415px;top:657px;width:89px;height:17px;line-height:18px;color:#353535"><i>12000036</i></div>
<div style="position:absolute;left:505px;top:657px;width:123px;height:17px;background:#e3e3e3;"></div>
<div class="t" style="left:508px;top:657px;width:120px;height:17px;line-height:18px;color:#353535"><i>600000002</i></div>
<div style="position:absolute;left:17px;top:674px;width:611px;height:1px;background:#bdbdbd;"></div>
<div style="position:absolute;left:33px;top:657px;width:1px;height:17px;background:#9c9c9c;"></div>
<div style="position:absolute;left:83px;top:657px;width:1px;height:17px;background:#cbcbcb;"></div>
<div style="position:absolute;left:193px;top:657px;width:1px;height:17px;background:#cbcbcb;"></div>
<div style="position:absolute;left:253px;top:657px;width:1px;height:17px;background:#cbcbcb;"></div>
<div style="position:absolute;left:355px;top:657px;width:1px;height:17px;background:#cbcbcb;"></div>
<div style="position:absolute;left:411px;top:657px;width:1px;height:17px;background:#cbcbcb;"></div>
<div style="position:absolute;left:504px;top:657px;width:1px;height:17px;background:#cbcbcb;"></div>
<div style="position:absolute;left:17px;top:675px;width:16px;height:17px;background:linear-gradient(90deg,#f7f7f7,#eeeeee);"></div>
<div style="position:absolute;left:34px;top:675px;width:49px;height:17px;background:#e3e3e3;"></div>
<div class="t tr" style="left:34px;top:675px;width:47px;height:17px;line-height:18px;color:#353535"><i>0<b class="cm">,</b>00</i></div>
<div style="position:absolute;left:84px;top:675px;width:109px;height:17px;background:#e3e3e3;"></div>
<div class="t" style="left:87px;top:675px;width:106px;height:17px;line-height:18px;color:#353535"><i>0</i></div>
<div style="position:absolute;left:194px;top:675px;width:59px;height:17px;background:#e3e3e3;"></div>
<div class="t" style="left:197px;top:675px;width:56px;height:17px;line-height:18px;color:#353535"><i>04<b class="sl">/</b>03<b class="sl">/</b>202</i></div>
<div style="position:absolute;left:254px;top:675px;width:101px;height:17px;background:#e3e3e3;"></div>
<div style="position:absolute;left:356px;top:675px;width:55px;height:17px;background:#e3e3e3;"></div>
<div style="position:absolute;left:412px;top:675px;width:92px;height:17px;background:#fdfdfd;"></div>
<div class="t" style="left:415px;top:675px;width:89px;height:17px;line-height:18px;color:#353535"><i>12000037</i></div>
<div style="position:absolute;left:505px;top:675px;width:123px;height:17px;background:#e3e3e3;"></div>
<div class="t" style="left:508px;top:675px;width:120px;height:17px;line-height:18px;color:#353535"><i>600000002</i></div>
<div style="position:absolute;left:17px;top:692px;width:611px;height:1px;background:#bdbdbd;"></div>
<div style="position:absolute;left:33px;top:675px;width:1px;height:17px;background:#9c9c9c;"></div>
<div style="position:absolute;left:83px;top:675px;width:1px;height:17px;background:#cbcbcb;"></div>
<div style="position:absolute;left:193px;top:675px;width:1px;height:17px;background:#cbcbcb;"></div>
<div style="position:absolute;left:253px;top:675px;width:1px;height:17px;background:#cbcbcb;"></div>
<div style="position:absolute;left:355px;top:675px;width:1px;height:17px;background:#cbcbcb;"></div>
<div style="position:absolute;left:411px;top:675px;width:1px;height:17px;background:#cbcbcb;"></div>
<div style="position:absolute;left:504px;top:675px;width:1px;height:17px;background:#cbcbcb;"></div>
<div style="position:absolute;left:17px;top:693px;width:16px;height:17px;background:linear-gradient(90deg,#f7f7f7,#eeeeee);"></div>
<div style="position:absolute;left:34px;top:693px;width:49px;height:17px;background:#e3e3e3;"></div>
<div class="t tr" style="left:34px;top:693px;width:47px;height:17px;line-height:18px;color:#353535"><i>5<b class="sp"> </b>585<b class="cm">,</b>42</i></div>
<div style="position:absolute;left:84px;top:693px;width:109px;height:17px;background:#e3e3e3;"></div>
<div class="t" style="left:87px;top:693px;width:106px;height:17px;line-height:18px;color:#353535"><i>7</i></div>
<div style="position:absolute;left:194px;top:693px;width:59px;height:17px;background:#e3e3e3;"></div>
<div class="t" style="left:197px;top:693px;width:56px;height:17px;line-height:18px;color:#353535"><i>05<b class="sl">/</b>03<b class="sl">/</b>202</i></div>
<div style="position:absolute;left:254px;top:693px;width:101px;height:17px;background:#e3e3e3;"></div>
<div style="position:absolute;left:356px;top:693px;width:55px;height:17px;background:#e3e3e3;"></div>
<div style="position:absolute;left:412px;top:693px;width:92px;height:17px;background:#fdfdfd;"></div>
<div class="t" style="left:415px;top:693px;width:89px;height:17px;line-height:18px;color:#353535"><i>12000038</i></div>
<div style="position:absolute;left:505px;top:693px;width:123px;height:17px;background:#e3e3e3;"></div>
<div class="t" style="left:508px;top:693px;width:120px;height:17px;line-height:18px;color:#353535"><i>600000002</i></div>
<div style="position:absolute;left:17px;top:710px;width:611px;height:1px;background:#bdbdbd;"></div>
<div style="position:absolute;left:33px;top:693px;width:1px;height:17px;background:#9c9c9c;"></div>
<div style="position:absolute;left:83px;top:693px;width:1px;height:17px;background:#cbcbcb;"></div>
<div style="position:absolute;left:193px;top:693px;width:1px;height:17px;background:#cbcbcb;"></div>
<div style="position:absolute;left:253px;top:693px;width:1px;height:17px;background:#cbcbcb;"></div>
<div style="position:absolute;left:355px;top:693px;width:1px;height:17px;background:#cbcbcb;"></div>
<div style="position:absolute;left:411px;top:693px;width:1px;height:17px;background:#cbcbcb;"></div>
<div style="position:absolute;left:504px;top:693px;width:1px;height:17px;background:#cbcbcb;"></div>
<div style="position:absolute;left:17px;top:711px;width:16px;height:17px;background:linear-gradient(90deg,#f7f7f7,#eeeeee);"></div>
<div style="position:absolute;left:34px;top:711px;width:49px;height:17px;background:#e3e3e3;"></div>
<div class="t tr" style="left:34px;top:711px;width:47px;height:17px;line-height:18px;color:#353535"><i>75<b class="cm">,</b>00</i></div>
<div style="position:absolute;left:84px;top:711px;width:109px;height:17px;background:#e3e3e3;"></div>
<div class="t" style="left:87px;top:711px;width:106px;height:17px;line-height:18px;color:#353535"><i>6</i></div>
<div style="position:absolute;left:194px;top:711px;width:59px;height:17px;background:#e3e3e3;"></div>
<div class="t" style="left:197px;top:711px;width:56px;height:17px;line-height:18px;color:#353535"><i>18<b class="sl">/</b>10<b class="sl">/</b>202</i></div>
<div style="position:absolute;left:254px;top:711px;width:101px;height:17px;background:#e3e3e3;"></div>
<div style="position:absolute;left:356px;top:711px;width:55px;height:17px;background:#e3e3e3;"></div>
<div style="position:absolute;left:412px;top:711px;width:92px;height:17px;background:#fdfdfd;"></div>
<div class="t" style="left:415px;top:711px;width:89px;height:17px;line-height:18px;color:#353535"><i>12000188</i></div>
<div style="position:absolute;left:505px;top:711px;width:123px;height:17px;background:#e3e3e3;"></div>
<div class="t" style="left:508px;top:711px;width:120px;height:17px;line-height:18px;color:#353535"><i>600000002</i></div>
<div style="position:absolute;left:17px;top:728px;width:611px;height:1px;background:#bdbdbd;"></div>
<div style="position:absolute;left:33px;top:711px;width:1px;height:17px;background:#9c9c9c;"></div>
<div style="position:absolute;left:83px;top:711px;width:1px;height:17px;background:#cbcbcb;"></div>
<div style="position:absolute;left:193px;top:711px;width:1px;height:17px;background:#cbcbcb;"></div>
<div style="position:absolute;left:253px;top:711px;width:1px;height:17px;background:#cbcbcb;"></div>
<div style="position:absolute;left:355px;top:711px;width:1px;height:17px;background:#cbcbcb;"></div>
<div style="position:absolute;left:411px;top:711px;width:1px;height:17px;background:#cbcbcb;"></div>
<div style="position:absolute;left:504px;top:711px;width:1px;height:17px;background:#cbcbcb;"></div>
<div style="position:absolute;left:17px;top:729px;width:16px;height:17px;background:linear-gradient(90deg,#f7f7f7,#eeeeee);"></div>
<div style="position:absolute;left:34px;top:729px;width:49px;height:17px;background:#e3e3e3;"></div>
<div class="t tr" style="left:34px;top:729px;width:47px;height:17px;line-height:18px;color:#353535"><i>0<b class="cm">,</b>00</i></div>
<div style="position:absolute;left:84px;top:729px;width:109px;height:17px;background:#e3e3e3;"></div>
<div class="t" style="left:87px;top:729px;width:106px;height:17px;line-height:18px;color:#353535"><i>6</i></div>
<div style="position:absolute;left:194px;top:729px;width:59px;height:17px;background:#e3e3e3;"></div>
<div class="t" style="left:197px;top:729px;width:56px;height:17px;line-height:18px;color:#353535"><i>22<b class="sl">/</b>10<b class="sl">/</b>202</i></div>
<div style="position:absolute;left:254px;top:729px;width:101px;height:17px;background:#e3e3e3;"></div>
<div style="position:absolute;left:356px;top:729px;width:55px;height:17px;background:#e3e3e3;"></div>
<div style="position:absolute;left:412px;top:729px;width:92px;height:17px;background:#fdfdfd;"></div>
<div class="t" style="left:415px;top:729px;width:89px;height:17px;line-height:18px;color:#353535"><i>12000193</i></div>
<div style="position:absolute;left:505px;top:729px;width:123px;height:17px;background:#e3e3e3;"></div>
<div class="t" style="left:508px;top:729px;width:120px;height:17px;line-height:18px;color:#353535"><i>600000002</i></div>
<div style="position:absolute;left:17px;top:746px;width:611px;height:1px;background:#bdbdbd;"></div>
<div style="position:absolute;left:33px;top:729px;width:1px;height:17px;background:#9c9c9c;"></div>
<div style="position:absolute;left:83px;top:729px;width:1px;height:17px;background:#cbcbcb;"></div>
<div style="position:absolute;left:193px;top:729px;width:1px;height:17px;background:#cbcbcb;"></div>
<div style="position:absolute;left:253px;top:729px;width:1px;height:17px;background:#cbcbcb;"></div>
<div style="position:absolute;left:355px;top:729px;width:1px;height:17px;background:#cbcbcb;"></div>
<div style="position:absolute;left:411px;top:729px;width:1px;height:17px;background:#cbcbcb;"></div>
<div style="position:absolute;left:504px;top:729px;width:1px;height:17px;background:#cbcbcb;"></div>
<div style="position:absolute;left:17px;top:747px;width:16px;height:17px;background:linear-gradient(90deg,#f7f7f7,#eeeeee);"></div>
<div style="position:absolute;left:34px;top:747px;width:49px;height:17px;background:#e3e3e3;"></div>
<div class="t tr" style="left:34px;top:747px;width:47px;height:17px;line-height:18px;color:#353535"><i>0<b class="cm">,</b>00</i></div>
<div style="position:absolute;left:84px;top:747px;width:109px;height:17px;background:#e3e3e3;"></div>
<div class="t" style="left:87px;top:747px;width:106px;height:17px;line-height:18px;color:#353535"><i>6</i></div>
<div style="position:absolute;left:194px;top:747px;width:59px;height:17px;background:#e3e3e3;"></div>
<div class="t" style="left:197px;top:747px;width:56px;height:17px;line-height:18px;color:#353535"><i>22<b class="sl">/</b>10<b class="sl">/</b>202</i></div>
<div style="position:absolute;left:254px;top:747px;width:101px;height:17px;background:#e3e3e3;"></div>
<div style="position:absolute;left:356px;top:747px;width:55px;height:17px;background:#e3e3e3;"></div>
<div style="position:absolute;left:412px;top:747px;width:92px;height:17px;background:#fdfdfd;"></div>
<div class="t" style="left:415px;top:747px;width:89px;height:17px;line-height:18px;color:#353535"><i>12000197</i></div>
<div style="position:absolute;left:505px;top:747px;width:123px;height:17px;background:#e3e3e3;"></div>
<div class="t" style="left:508px;top:747px;width:120px;height:17px;line-height:18px;color:#353535"><i>600000002</i></div>
<div style="position:absolute;left:17px;top:764px;width:611px;height:1px;background:#bdbdbd;"></div>
<div style="position:absolute;left:33px;top:747px;width:1px;height:17px;background:#9c9c9c;"></div>
<div style="position:absolute;left:83px;top:747px;width:1px;height:17px;background:#cbcbcb;"></div>
<div style="position:absolute;left:193px;top:747px;width:1px;height:17px;background:#cbcbcb;"></div>
<div style="position:absolute;left:253px;top:747px;width:1px;height:17px;background:#cbcbcb;"></div>
<div style="position:absolute;left:355px;top:747px;width:1px;height:17px;background:#cbcbcb;"></div>
<div style="position:absolute;left:411px;top:747px;width:1px;height:17px;background:#cbcbcb;"></div>
<div style="position:absolute;left:504px;top:747px;width:1px;height:17px;background:#cbcbcb;"></div>
<div style="position:absolute;left:17px;top:765px;width:16px;height:17px;background:linear-gradient(90deg,#f7f7f7,#eeeeee);"></div>
<div style="position:absolute;left:34px;top:765px;width:49px;height:17px;background:#e3e3e3;"></div>
<div class="t tr" style="left:34px;top:765px;width:47px;height:17px;line-height:18px;color:#353535"><i>0<b class="cm">,</b>00</i></div>
<div style="position:absolute;left:84px;top:765px;width:109px;height:17px;background:#e3e3e3;"></div>
<div class="t" style="left:87px;top:765px;width:106px;height:17px;line-height:18px;color:#353535"><i>6</i></div>
<div style="position:absolute;left:194px;top:765px;width:59px;height:17px;background:#e3e3e3;"></div>
<div class="t" style="left:197px;top:765px;width:56px;height:17px;line-height:18px;color:#353535"><i>22<b class="sl">/</b>10<b class="sl">/</b>202</i></div>
<div style="position:absolute;left:254px;top:765px;width:101px;height:17px;background:#e3e3e3;"></div>
<div style="position:absolute;left:356px;top:765px;width:55px;height:17px;background:#e3e3e3;"></div>
<div style="position:absolute;left:412px;top:765px;width:92px;height:17px;background:#fdfdfd;"></div>
<div class="t" style="left:415px;top:765px;width:89px;height:17px;line-height:18px;color:#353535"><i>12000198</i></div>
<div style="position:absolute;left:505px;top:765px;width:123px;height:17px;background:#e3e3e3;"></div>
<div class="t" style="left:508px;top:765px;width:120px;height:17px;line-height:18px;color:#353535"><i>600000002</i></div>
<div style="position:absolute;left:17px;top:782px;width:611px;height:1px;background:#bdbdbd;"></div>
<div style="position:absolute;left:33px;top:765px;width:1px;height:17px;background:#9c9c9c;"></div>
<div style="position:absolute;left:83px;top:765px;width:1px;height:17px;background:#cbcbcb;"></div>
<div style="position:absolute;left:193px;top:765px;width:1px;height:17px;background:#cbcbcb;"></div>
<div style="position:absolute;left:253px;top:765px;width:1px;height:17px;background:#cbcbcb;"></div>
<div style="position:absolute;left:355px;top:765px;width:1px;height:17px;background:#cbcbcb;"></div>
<div style="position:absolute;left:411px;top:765px;width:1px;height:17px;background:#cbcbcb;"></div>
<div style="position:absolute;left:504px;top:765px;width:1px;height:17px;background:#cbcbcb;"></div>
<div style="position:absolute;left:17px;top:783px;width:16px;height:4px;background:linear-gradient(90deg,#f7f7f7,#eeeeee);"></div>
<div style="position:absolute;left:34px;top:783px;width:49px;height:4px;background:#e3e3e3;"></div>
<div style="position:absolute;left:84px;top:783px;width:109px;height:4px;background:#e3e3e3;"></div>
<div style="position:absolute;left:194px;top:783px;width:59px;height:4px;background:#e3e3e3;"></div>
<div style="position:absolute;left:254px;top:783px;width:101px;height:4px;background:#e3e3e3;"></div>
<div style="position:absolute;left:356px;top:783px;width:55px;height:4px;background:#e3e3e3;"></div>
<div style="position:absolute;left:412px;top:783px;width:92px;height:4px;background:#fdfdfd;"></div>
<div style="position:absolute;left:505px;top:783px;width:123px;height:4px;background:#e3e3e3;"></div>
<div style="position:absolute;left:33px;top:783px;width:1px;height:4px;background:#9c9c9c;"></div>
<div style="position:absolute;left:83px;top:783px;width:1px;height:4px;background:#cbcbcb;"></div>
<div style="position:absolute;left:193px;top:783px;width:1px;height:4px;background:#cbcbcb;"></div>
<div style="position:absolute;left:253px;top:783px;width:1px;height:4px;background:#cbcbcb;"></div>
<div style="position:absolute;left:355px;top:783px;width:1px;height:4px;background:#cbcbcb;"></div>
<div style="position:absolute;left:411px;top:783px;width:1px;height:4px;background:#cbcbcb;"></div>
<div style="position:absolute;left:504px;top:783px;width:1px;height:4px;background:#cbcbcb;"></div>
<div style="position:absolute;left:628px;top:584px;width:18px;height:221px;background:#f0f0f0;"></div>
<div style="position:absolute;left:630px;top:604px;width:14px;height:35px;background:#cdcdcd;"></div>
<div style="position:absolute;left:632px;top:591px;line-height:0"><svg width="10" height="6" viewBox="0 0 10 6"><path d="M1 5 L5 1.3 L9 5" fill="none" stroke="#606060" stroke-width="2.2"/></svg></div>
<div style="position:absolute;left:632px;top:775px;line-height:0"><svg width="10" height="6" viewBox="0 0 10 6"><path d="M1 1 L5 4.7 L9 1" fill="none" stroke="#606060" stroke-width="2.2"/></svg></div>
<div style="position:absolute;left:17px;top:787px;width:611px;height:18px;background:#f0f0f0;"></div>
<div style="position:absolute;left:37px;top:788px;width:515px;height:15px;background:#cdcdcd;"></div>
<div style="position:absolute;left:24px;top:791px;line-height:0"><svg width="6" height="10" viewBox="0 0 6 10"><path d="M5 1 L1.3 5 L5 9" fill="none" stroke="#606060" stroke-width="2.2"/></svg></div>
<div style="position:absolute;left:617px;top:791px;line-height:0"><svg width="6" height="10" viewBox="0 0 6 10"><path d="M1 1 L4.7 5 L1 9" fill="none" stroke="#606060" stroke-width="2.2"/></svg></div>
<div style="position:absolute;left:661px;top:566px;width:633px;height:242px;background:#ffffff;box-sizing:border-box;border-left:1px solid #d0d0d0;border-top:1px solid #d6d6d6;border-right:2px solid #a9a9a9;border-bottom:2px solid #a9a9a9;"></div>
<div style="position:absolute;left:662px;top:566px;width:630px;height:18px;background:linear-gradient(#c9d5e0,#bfccd8);"></div>
<div class="t ti" style="left:668px;top:567px;width:500px;height:17px;text-align:left;line-height:17px;color:#2e353c;line-height:19px"><i>Mes commandes non payées [89]</i></div>
<div style="position:absolute;left:662px;top:584px;width:611px;height:18px;background:linear-gradient(#fbfbfb,#f1f1f1);"></div>
<div style="position:absolute;left:662px;top:602px;width:611px;height:1px;background:#b9b9b9;"></div>
<div style="position:absolute;left:678px;top:585px;width:1px;height:17px;background:#a8a8a8;"></div>
<div style="position:absolute;left:729px;top:585px;width:1px;height:17px;background:#c8c8c8;"></div>
<div style="position:absolute;left:839px;top:585px;width:1px;height:17px;background:#c8c8c8;"></div>
<div style="position:absolute;left:940px;top:585px;width:1px;height:17px;background:#c8c8c8;"></div>
<div style="position:absolute;left:1041px;top:585px;width:1px;height:17px;background:#c8c8c8;"></div>
<div style="position:absolute;left:1143px;top:585px;width:1px;height:17px;background:#c8c8c8;"></div>
<div style="position:absolute;left:1236px;top:585px;width:1px;height:17px;background:#c8c8c8;"></div>
<div class="t th" style="left:682px;top:584px;width:47px;height:18px;line-height:20px;color:#363636"><i>Total HT</i></div>
<div class="t th" style="left:733px;top:584px;width:106px;height:18px;line-height:20px;color:#363636"><i>Nb cols équivalents</i></div>
<div class="t th" style="left:843px;top:584px;width:97px;height:18px;line-height:20px;color:#363636"><i>Date cmd.</i></div>
<div class="t th" style="left:944px;top:584px;width:97px;height:18px;line-height:20px;color:#363636"><i>Date fin option</i></div>
<div class="t th" style="left:1045px;top:584px;width:98px;height:18px;line-height:20px;color:#363636"><i>Date éch.</i></div>
<div class="t th" style="left:1147px;top:584px;width:89px;height:18px;line-height:20px;color:#363636"><i>N° Commande</i></div>
<div class="t th" style="left:1240px;top:584px;width:33px;height:18px;line-height:20px;color:#363636"><i>Code tiers</i></div>
<div style="position:absolute;left:662px;top:603px;width:16px;height:17px;background:linear-gradient(90deg,#f7f7f7,#eeeeee);"></div>
<div style="position:absolute;left:668px;top:606px;width:0;height:0;border-top:5.5px solid transparent;border-bottom:5.5px solid transparent;border-left:6px solid #0a0a0a"></div>
<div style="position:absolute;left:679px;top:603px;width:50px;height:17px;background:linear-gradient(90deg,#fbfbe6,#fcfcd8);"></div>
<div class="t tr" style="left:679px;top:603px;width:48px;height:17px;line-height:18px;color:#a8402a"><i>522<b class="cm">,</b>00</i></div>
<div style="position:absolute;left:730px;top:603px;width:109px;height:17px;background:#e3e3e3;"></div>
<div class="t" style="left:733px;top:603px;width:106px;height:17px;line-height:18px;color:#353535"><i>8</i></div>
<div style="position:absolute;left:840px;top:603px;width:100px;height:17px;background:#e3e3e3;"></div>
<div class="t" style="left:843px;top:603px;width:97px;height:17px;line-height:18px;color:#353535"><i>04<b class="sl">/</b>12<b class="sl">/</b>2023</i></div>
<div style="position:absolute;left:941px;top:603px;width:100px;height:17px;background:#e3e3e3;"></div>
<div style="position:absolute;left:1042px;top:603px;width:101px;height:17px;background:#e3e3e3;"></div>
<div style="position:absolute;left:1144px;top:603px;width:92px;height:17px;background:#fdfdfd;"></div>
<div class="t" style="left:1147px;top:603px;width:89px;height:17px;line-height:18px;color:#353535"><i>12000006</i></div>
<div style="position:absolute;left:1237px;top:603px;width:36px;height:17px;background:#e3e3e3;"></div>
<div class="t" style="left:1240px;top:603px;width:33px;height:17px;line-height:18px;color:#353535"><i>100000013</i></div>
<div style="position:absolute;left:662px;top:620px;width:611px;height:1px;background:#bdbdbd;"></div>
<div style="position:absolute;left:678px;top:603px;width:1px;height:17px;background:#9c9c9c;"></div>
<div style="position:absolute;left:729px;top:603px;width:1px;height:17px;background:#cbcbcb;"></div>
<div style="position:absolute;left:839px;top:603px;width:1px;height:17px;background:#cbcbcb;"></div>
<div style="position:absolute;left:940px;top:603px;width:1px;height:17px;background:#cbcbcb;"></div>
<div style="position:absolute;left:1041px;top:603px;width:1px;height:17px;background:#cbcbcb;"></div>
<div style="position:absolute;left:1143px;top:603px;width:1px;height:17px;background:#cbcbcb;"></div>
<div style="position:absolute;left:1236px;top:603px;width:1px;height:17px;background:#cbcbcb;"></div>
<div style="position:absolute;left:662px;top:621px;width:16px;height:17px;background:linear-gradient(90deg,#f7f7f7,#eeeeee);"></div>
<div style="position:absolute;left:679px;top:621px;width:50px;height:17px;background:#e3e3e3;"></div>
<div class="t tr" style="left:679px;top:621px;width:48px;height:17px;line-height:18px;color:#353535"><i>522<b class="cm">,</b>00</i></div>
<div style="position:absolute;left:730px;top:621px;width:109px;height:17px;background:#e3e3e3;"></div>
<div class="t" style="left:733px;top:621px;width:106px;height:17px;line-height:18px;color:#353535"><i>8</i></div>
<div style="position:absolute;left:840px;top:621px;width:100px;height:17px;background:#e3e3e3;"></div>
<div class="t" style="left:843px;top:621px;width:97px;height:17px;line-height:18px;color:#353535"><i>19<b class="sl">/</b>12<b class="sl">/</b>2023</i></div>
<div style="position:absolute;left:941px;top:621px;width:100px;height:17px;background:#e3e3e3;"></div>
<div style="position:absolute;left:1042px;top:621px;width:101px;height:17px;background:#e3e3e3;"></div>
<div style="position:absolute;left:1144px;top:621px;width:92px;height:17px;background:#fdfdfd;"></div>
<div class="t" style="left:1147px;top:621px;width:89px;height:17px;line-height:18px;color:#353535"><i>12000008</i></div>
<div style="position:absolute;left:1237px;top:621px;width:36px;height:17px;background:#e3e3e3;"></div>
<div class="t" style="left:1240px;top:621px;width:33px;height:17px;line-height:18px;color:#353535"><i>100000013</i></div>
<div style="position:absolute;left:662px;top:638px;width:611px;height:1px;background:#bdbdbd;"></div>
<div style="position:absolute;left:678px;top:621px;width:1px;height:17px;background:#9c9c9c;"></div>
<div style="position:absolute;left:729px;top:621px;width:1px;height:17px;background:#cbcbcb;"></div>
<div style="position:absolute;left:839px;top:621px;width:1px;height:17px;background:#cbcbcb;"></div>
<div style="position:absolute;left:940px;top:621px;width:1px;height:17px;background:#cbcbcb;"></div>
<div style="position:absolute;left:1041px;top:621px;width:1px;height:17px;background:#cbcbcb;"></div>
<div style="position:absolute;left:1143px;top:621px;width:1px;height:17px;background:#cbcbcb;"></div>
<div style="position:absolute;left:1236px;top:621px;width:1px;height:17px;background:#cbcbcb;"></div>
<div style="position:absolute;left:662px;top:639px;width:16px;height:17px;background:linear-gradient(90deg,#f7f7f7,#eeeeee);"></div>
<div style="position:absolute;left:679px;top:639px;width:50px;height:17px;background:#e3e3e3;"></div>
<div class="t tr" style="left:679px;top:639px;width:48px;height:17px;line-height:18px;color:#353535"><i>1<b class="sp"> </b>068<b class="cm">,</b>00</i></div>
<div style="position:absolute;left:730px;top:639px;width:109px;height:17px;background:#e3e3e3;"></div>
<div class="t" style="left:733px;top:639px;width:106px;height:17px;line-height:18px;color:#353535"><i>24</i></div>
<div style="position:absolute;left:840px;top:639px;width:100px;height:17px;background:#e3e3e3;"></div>
<div class="t" style="left:843px;top:639px;width:97px;height:17px;line-height:18px;color:#353535"><i>15<b class="sl">/</b>01<b class="sl">/</b>2024</i></div>
<div style="position:absolute;left:941px;top:639px;width:100px;height:17px;background:#e3e3e3;"></div>
<div style="position:absolute;left:1042px;top:639px;width:101px;height:17px;background:#e3e3e3;"></div>
<div style="position:absolute;left:1144px;top:639px;width:92px;height:17px;background:#fdfdfd;"></div>
<div class="t" style="left:1147px;top:639px;width:89px;height:17px;line-height:18px;color:#353535"><i>12000017</i></div>
<div style="position:absolute;left:1237px;top:639px;width:36px;height:17px;background:#e3e3e3;"></div>
<div class="t" style="left:1240px;top:639px;width:33px;height:17px;line-height:18px;color:#353535"><i>100000013</i></div>
<div style="position:absolute;left:662px;top:656px;width:611px;height:1px;background:#bdbdbd;"></div>
<div style="position:absolute;left:678px;top:639px;width:1px;height:17px;background:#9c9c9c;"></div>
<div style="position:absolute;left:729px;top:639px;width:1px;height:17px;background:#cbcbcb;"></div>
<div style="position:absolute;left:839px;top:639px;width:1px;height:17px;background:#cbcbcb;"></div>
<div style="position:absolute;left:940px;top:639px;width:1px;height:17px;background:#cbcbcb;"></div>
<div style="position:absolute;left:1041px;top:639px;width:1px;height:17px;background:#cbcbcb;"></div>
<div style="position:absolute;left:1143px;top:639px;width:1px;height:17px;background:#cbcbcb;"></div>
<div style="position:absolute;left:1236px;top:639px;width:1px;height:17px;background:#cbcbcb;"></div>
<div style="position:absolute;left:662px;top:657px;width:16px;height:17px;background:linear-gradient(90deg,#f7f7f7,#eeeeee);"></div>
<div style="position:absolute;left:679px;top:657px;width:50px;height:17px;background:#e3e3e3;"></div>
<div class="t tr" style="left:679px;top:657px;width:48px;height:17px;line-height:18px;color:#353535"><i>1<b class="sp"> </b>068<b class="cm">,</b>00</i></div>
<div style="position:absolute;left:730px;top:657px;width:109px;height:17px;background:#e3e3e3;"></div>
<div class="t" style="left:733px;top:657px;width:106px;height:17px;line-height:18px;color:#353535"><i>24</i></div>
<div style="position:absolute;left:840px;top:657px;width:100px;height:17px;background:#e3e3e3;"></div>
<div class="t" style="left:843px;top:657px;width:97px;height:17px;line-height:18px;color:#353535"><i>16<b class="sl">/</b>01<b class="sl">/</b>2024</i></div>
<div style="position:absolute;left:941px;top:657px;width:100px;height:17px;background:#e3e3e3;"></div>
<div style="position:absolute;left:1042px;top:657px;width:101px;height:17px;background:#e3e3e3;"></div>
<div style="position:absolute;left:1144px;top:657px;width:92px;height:17px;background:#fdfdfd;"></div>
<div class="t" style="left:1147px;top:657px;width:89px;height:17px;line-height:18px;color:#353535"><i>12000020</i></div>
<div style="position:absolute;left:1237px;top:657px;width:36px;height:17px;background:#e3e3e3;"></div>
<div class="t" style="left:1240px;top:657px;width:33px;height:17px;line-height:18px;color:#353535"><i>100000013</i></div>
<div style="position:absolute;left:662px;top:674px;width:611px;height:1px;background:#bdbdbd;"></div>
<div style="position:absolute;left:678px;top:657px;width:1px;height:17px;background:#9c9c9c;"></div>
<div style="position:absolute;left:729px;top:657px;width:1px;height:17px;background:#cbcbcb;"></div>
<div style="position:absolute;left:839px;top:657px;width:1px;height:17px;background:#cbcbcb;"></div>
<div style="position:absolute;left:940px;top:657px;width:1px;height:17px;background:#cbcbcb;"></div>
<div style="position:absolute;left:1041px;top:657px;width:1px;height:17px;background:#cbcbcb;"></div>
<div style="position:absolute;left:1143px;top:657px;width:1px;height:17px;background:#cbcbcb;"></div>
<div style="position:absolute;left:1236px;top:657px;width:1px;height:17px;background:#cbcbcb;"></div>
<div style="position:absolute;left:662px;top:675px;width:16px;height:17px;background:linear-gradient(90deg,#f7f7f7,#eeeeee);"></div>
<div style="position:absolute;left:679px;top:675px;width:50px;height:17px;background:#e3e3e3;"></div>
<div class="t tr" style="left:679px;top:675px;width:48px;height:17px;line-height:18px;color:#353535"><i>7<b class="sp"> </b>000<b class="cm">,</b>00</i></div>
<div style="position:absolute;left:730px;top:675px;width:109px;height:17px;background:#e3e3e3;"></div>
<div class="t" style="left:733px;top:675px;width:106px;height:17px;line-height:18px;color:#353535"><i>1000</i></div>
<div style="position:absolute;left:840px;top:675px;width:100px;height:17px;background:#e3e3e3;"></div>
<div class="t" style="left:843px;top:675px;width:97px;height:17px;line-height:18px;color:#353535"><i>16<b class="sl">/</b>01<b class="sl">/</b>2024</i></div>
<div style="position:absolute;left:941px;top:675px;width:100px;height:17px;background:#e3e3e3;"></div>
<div style="position:absolute;left:1042px;top:675px;width:101px;height:17px;background:#e3e3e3;"></div>
<div style="position:absolute;left:1144px;top:675px;width:92px;height:17px;background:#fdfdfd;"></div>
<div class="t" style="left:1147px;top:675px;width:89px;height:17px;line-height:18px;color:#353535"><i>12000022</i></div>
<div style="position:absolute;left:1237px;top:675px;width:36px;height:17px;background:#e3e3e3;"></div>
<div class="t" style="left:1240px;top:675px;width:33px;height:17px;line-height:18px;color:#353535"><i>100000013</i></div>
<div style="position:absolute;left:662px;top:692px;width:611px;height:1px;background:#bdbdbd;"></div>
<div style="position:absolute;left:678px;top:675px;width:1px;height:17px;background:#9c9c9c;"></div>
<div style="position:absolute;left:729px;top:675px;width:1px;height:17px;background:#cbcbcb;"></div>
<div style="position:absolute;left:839px;top:675px;width:1px;height:17px;background:#cbcbcb;"></div>
<div style="position:absolute;left:940px;top:675px;width:1px;height:17px;background:#cbcbcb;"></div>
<div style="position:absolute;left:1041px;top:675px;width:1px;height:17px;background:#cbcbcb;"></div>
<div style="position:absolute;left:1143px;top:675px;width:1px;height:17px;background:#cbcbcb;"></div>
<div style="position:absolute;left:1236px;top:675px;width:1px;height:17px;background:#cbcbcb;"></div>
<div style="position:absolute;left:662px;top:693px;width:16px;height:17px;background:linear-gradient(90deg,#f7f7f7,#eeeeee);"></div>
<div style="position:absolute;left:679px;top:693px;width:50px;height:17px;background:#e3e3e3;"></div>
<div class="t tr" style="left:679px;top:693px;width:48px;height:17px;line-height:18px;color:#353535"><i>299<b class="cm">,</b>70</i></div>
<div style="position:absolute;left:730px;top:693px;width:109px;height:17px;background:#e3e3e3;"></div>
<div class="t" style="left:733px;top:693px;width:106px;height:17px;line-height:18px;color:#353535"><i>6</i></div>
<div style="position:absolute;left:840px;top:693px;width:100px;height:17px;background:#e3e3e3;"></div>
<div class="t" style="left:843px;top:693px;width:97px;height:17px;line-height:18px;color:#353535"><i>24<b class="sl">/</b>01<b class="sl">/</b>2024</i></div>
<div style="position:absolute;left:941px;top:693px;width:100px;height:17px;background:#e3e3e3;"></div>
<div style="position:absolute;left:1042px;top:693px;width:101px;height:17px;background:#e3e3e3;"></div>
<div style="position:absolute;left:1144px;top:693px;width:92px;height:17px;background:#fdfdfd;"></div>
<div class="t" style="left:1147px;top:693px;width:89px;height:17px;line-height:18px;color:#353535"><i>12000023</i></div>
<div style="position:absolute;left:1237px;top:693px;width:36px;height:17px;background:#e3e3e3;"></div>
<div class="t" style="left:1240px;top:693px;width:33px;height:17px;line-height:18px;color:#353535"><i>100000013</i></div>
<div style="position:absolute;left:662px;top:710px;width:611px;height:1px;background:#bdbdbd;"></div>
<div style="position:absolute;left:678px;top:693px;width:1px;height:17px;background:#9c9c9c;"></div>
<div style="position:absolute;left:729px;top:693px;width:1px;height:17px;background:#cbcbcb;"></div>
<div style="position:absolute;left:839px;top:693px;width:1px;height:17px;background:#cbcbcb;"></div>
<div style="position:absolute;left:940px;top:693px;width:1px;height:17px;background:#cbcbcb;"></div>
<div style="position:absolute;left:1041px;top:693px;width:1px;height:17px;background:#cbcbcb;"></div>
<div style="position:absolute;left:1143px;top:693px;width:1px;height:17px;background:#cbcbcb;"></div>
<div style="position:absolute;left:1236px;top:693px;width:1px;height:17px;background:#cbcbcb;"></div>
<div style="position:absolute;left:662px;top:711px;width:16px;height:17px;background:linear-gradient(90deg,#f7f7f7,#eeeeee);"></div>
<div style="position:absolute;left:679px;top:711px;width:50px;height:17px;background:#e3e3e3;"></div>
<div class="t tr" style="left:679px;top:711px;width:48px;height:17px;line-height:18px;color:#353535"><i>961<b class="cm">,</b>20</i></div>
<div style="position:absolute;left:730px;top:711px;width:109px;height:17px;background:#e3e3e3;"></div>
<div class="t" style="left:733px;top:711px;width:106px;height:17px;line-height:18px;color:#353535"><i>24</i></div>
<div style="position:absolute;left:840px;top:711px;width:100px;height:17px;background:#e3e3e3;"></div>
<div class="t" style="left:843px;top:711px;width:97px;height:17px;line-height:18px;color:#353535"><i>30<b class="sl">/</b>01<b class="sl">/</b>2024</i></div>
<div style="position:absolute;left:941px;top:711px;width:100px;height:17px;background:#e3e3e3;"></div>
<div style="position:absolute;left:1042px;top:711px;width:101px;height:17px;background:#e3e3e3;"></div>
<div style="position:absolute;left:1144px;top:711px;width:92px;height:17px;background:#fdfdfd;"></div>
<div class="t" style="left:1147px;top:711px;width:89px;height:17px;line-height:18px;color:#353535"><i>12000024</i></div>
<div style="position:absolute;left:1237px;top:711px;width:36px;height:17px;background:#e3e3e3;"></div>
<div class="t" style="left:1240px;top:711px;width:33px;height:17px;line-height:18px;color:#353535"><i>100000013</i></div>
<div style="position:absolute;left:662px;top:728px;width:611px;height:1px;background:#bdbdbd;"></div>
<div style="position:absolute;left:678px;top:711px;width:1px;height:17px;background:#9c9c9c;"></div>
<div style="position:absolute;left:729px;top:711px;width:1px;height:17px;background:#cbcbcb;"></div>
<div style="position:absolute;left:839px;top:711px;width:1px;height:17px;background:#cbcbcb;"></div>
<div style="position:absolute;left:940px;top:711px;width:1px;height:17px;background:#cbcbcb;"></div>
<div style="position:absolute;left:1041px;top:711px;width:1px;height:17px;background:#cbcbcb;"></div>
<div style="position:absolute;left:1143px;top:711px;width:1px;height:17px;background:#cbcbcb;"></div>
<div style="position:absolute;left:1236px;top:711px;width:1px;height:17px;background:#cbcbcb;"></div>
<div style="position:absolute;left:662px;top:729px;width:16px;height:17px;background:linear-gradient(90deg,#f7f7f7,#eeeeee);"></div>
<div style="position:absolute;left:679px;top:729px;width:50px;height:17px;background:#e3e3e3;"></div>
<div class="t tr" style="left:679px;top:729px;width:48px;height:17px;line-height:18px;color:#353535"><i>1<b class="sp"> </b>400<b class="cm">,</b>00</i></div>
<div style="position:absolute;left:730px;top:729px;width:109px;height:17px;background:#e3e3e3;"></div>
<div class="t" style="left:733px;top:729px;width:106px;height:17px;line-height:18px;color:#353535"><i>600</i></div>
<div style="position:absolute;left:840px;top:729px;width:100px;height:17px;background:#e3e3e3;"></div>
<div class="t" style="left:843px;top:729px;width:97px;height:17px;line-height:18px;color:#353535"><i>12<b class="sl">/</b>02<b class="sl">/</b>2024</i></div>
<div style="position:absolute;left:941px;top:729px;width:100px;height:17px;background:#e3e3e3;"></div>
<div style="position:absolute;left:1042px;top:729px;width:101px;height:17px;background:#e3e3e3;"></div>
<div style="position:absolute;left:1144px;top:729px;width:92px;height:17px;background:#fdfdfd;"></div>
<div class="t" style="left:1147px;top:729px;width:89px;height:17px;line-height:18px;color:#353535"><i>12000027</i></div>
<div style="position:absolute;left:1237px;top:729px;width:36px;height:17px;background:#e3e3e3;"></div>
<div class="t" style="left:1240px;top:729px;width:33px;height:17px;line-height:18px;color:#353535"><i>600000002</i></div>
<div style="position:absolute;left:662px;top:746px;width:611px;height:1px;background:#bdbdbd;"></div>
<div style="position:absolute;left:678px;top:729px;width:1px;height:17px;background:#9c9c9c;"></div>
<div style="position:absolute;left:729px;top:729px;width:1px;height:17px;background:#cbcbcb;"></div>
<div style="position:absolute;left:839px;top:729px;width:1px;height:17px;background:#cbcbcb;"></div>
<div style="position:absolute;left:940px;top:729px;width:1px;height:17px;background:#cbcbcb;"></div>
<div style="position:absolute;left:1041px;top:729px;width:1px;height:17px;background:#cbcbcb;"></div>
<div style="position:absolute;left:1143px;top:729px;width:1px;height:17px;background:#cbcbcb;"></div>
<div style="position:absolute;left:1236px;top:729px;width:1px;height:17px;background:#cbcbcb;"></div>
<div style="position:absolute;left:662px;top:747px;width:16px;height:17px;background:linear-gradient(90deg,#f7f7f7,#eeeeee);"></div>
<div style="position:absolute;left:679px;top:747px;width:50px;height:17px;background:#e3e3e3;"></div>
<div class="t tr" style="left:679px;top:747px;width:48px;height:17px;line-height:18px;color:#353535"><i>5<b class="sp"> </b>585<b class="cm">,</b>42</i></div>
<div style="position:absolute;left:730px;top:747px;width:109px;height:17px;background:#e3e3e3;"></div>
<div class="t" style="left:733px;top:747px;width:106px;height:17px;line-height:18px;color:#353535"><i>7</i></div>
<div style="position:absolute;left:840px;top:747px;width:100px;height:17px;background:#e3e3e3;"></div>
<div class="t" style="left:843px;top:747px;width:97px;height:17px;line-height:18px;color:#353535"><i>05<b class="sl">/</b>03<b class="sl">/</b>2024</i></div>
<div style="position:absolute;left:941px;top:747px;width:100px;height:17px;background:#e3e3e3;"></div>
<div style="position:absolute;left:1042px;top:747px;width:101px;height:17px;background:#e3e3e3;"></div>
<div style="position:absolute;left:1144px;top:747px;width:92px;height:17px;background:#fdfdfd;"></div>
<div class="t" style="left:1147px;top:747px;width:89px;height:17px;line-height:18px;color:#353535"><i>12000038</i></div>
<div style="position:absolute;left:1237px;top:747px;width:36px;height:17px;background:#e3e3e3;"></div>
<div class="t" style="left:1240px;top:747px;width:33px;height:17px;line-height:18px;color:#353535"><i>600000002</i></div>
<div style="position:absolute;left:662px;top:764px;width:611px;height:1px;background:#bdbdbd;"></div>
<div style="position:absolute;left:678px;top:747px;width:1px;height:17px;background:#9c9c9c;"></div>
<div style="position:absolute;left:729px;top:747px;width:1px;height:17px;background:#cbcbcb;"></div>
<div style="position:absolute;left:839px;top:747px;width:1px;height:17px;background:#cbcbcb;"></div>
<div style="position:absolute;left:940px;top:747px;width:1px;height:17px;background:#cbcbcb;"></div>
<div style="position:absolute;left:1041px;top:747px;width:1px;height:17px;background:#cbcbcb;"></div>
<div style="position:absolute;left:1143px;top:747px;width:1px;height:17px;background:#cbcbcb;"></div>
<div style="position:absolute;left:1236px;top:747px;width:1px;height:17px;background:#cbcbcb;"></div>
<div style="position:absolute;left:662px;top:765px;width:16px;height:17px;background:linear-gradient(90deg,#f7f7f7,#eeeeee);"></div>
<div style="position:absolute;left:679px;top:765px;width:50px;height:17px;background:#e3e3e3;"></div>
<div class="t tr" style="left:679px;top:765px;width:48px;height:17px;line-height:18px;color:#353535"><i>3<b class="sp"> </b>912<b class="cm">,</b>00</i></div>
<div style="position:absolute;left:730px;top:765px;width:109px;height:17px;background:#e3e3e3;"></div>
<div class="t" style="left:733px;top:765px;width:106px;height:17px;line-height:18px;color:#353535"><i>12</i></div>
<div style="position:absolute;left:840px;top:765px;width:100px;height:17px;background:#e3e3e3;"></div>
<div class="t" style="left:843px;top:765px;width:97px;height:17px;line-height:18px;color:#353535"><i>08<b class="sl">/</b>03<b class="sl">/</b>2024</i></div>
<div style="position:absolute;left:941px;top:765px;width:100px;height:17px;background:#e3e3e3;"></div>
<div style="position:absolute;left:1042px;top:765px;width:101px;height:17px;background:#e3e3e3;"></div>
<div style="position:absolute;left:1144px;top:765px;width:92px;height:17px;background:#fdfdfd;"></div>
<div class="t" style="left:1147px;top:765px;width:89px;height:17px;line-height:18px;color:#353535"><i>12000042</i></div>
<div style="position:absolute;left:1237px;top:765px;width:36px;height:17px;background:#e3e3e3;"></div>
<div class="t" style="left:1240px;top:765px;width:33px;height:17px;line-height:18px;color:#353535"><i>100000013</i></div>
<div style="position:absolute;left:662px;top:782px;width:611px;height:1px;background:#bdbdbd;"></div>
<div style="position:absolute;left:678px;top:765px;width:1px;height:17px;background:#9c9c9c;"></div>
<div style="position:absolute;left:729px;top:765px;width:1px;height:17px;background:#cbcbcb;"></div>
<div style="position:absolute;left:839px;top:765px;width:1px;height:17px;background:#cbcbcb;"></div>
<div style="position:absolute;left:940px;top:765px;width:1px;height:17px;background:#cbcbcb;"></div>
<div style="position:absolute;left:1041px;top:765px;width:1px;height:17px;background:#cbcbcb;"></div>
<div style="position:absolute;left:1143px;top:765px;width:1px;height:17px;background:#cbcbcb;"></div>
<div style="position:absolute;left:1236px;top:765px;width:1px;height:17px;background:#cbcbcb;"></div>
<div style="position:absolute;left:662px;top:783px;width:16px;height:4px;background:linear-gradient(90deg,#f7f7f7,#eeeeee);"></div>
<div style="position:absolute;left:679px;top:783px;width:50px;height:4px;background:#e3e3e3;"></div>
<div style="position:absolute;left:730px;top:783px;width:109px;height:4px;background:#e3e3e3;"></div>
<div style="position:absolute;left:840px;top:783px;width:100px;height:4px;background:#e3e3e3;"></div>
<div style="position:absolute;left:941px;top:783px;width:100px;height:4px;background:#e3e3e3;"></div>
<div style="position:absolute;left:1042px;top:783px;width:101px;height:4px;background:#e3e3e3;"></div>
<div style="position:absolute;left:1144px;top:783px;width:92px;height:4px;background:#fdfdfd;"></div>
<div style="position:absolute;left:1237px;top:783px;width:36px;height:4px;background:#e3e3e3;"></div>
<div style="position:absolute;left:678px;top:783px;width:1px;height:4px;background:#9c9c9c;"></div>
<div style="position:absolute;left:729px;top:783px;width:1px;height:4px;background:#cbcbcb;"></div>
<div style="position:absolute;left:839px;top:783px;width:1px;height:4px;background:#cbcbcb;"></div>
<div style="position:absolute;left:940px;top:783px;width:1px;height:4px;background:#cbcbcb;"></div>
<div style="position:absolute;left:1041px;top:783px;width:1px;height:4px;background:#cbcbcb;"></div>
<div style="position:absolute;left:1143px;top:783px;width:1px;height:4px;background:#cbcbcb;"></div>
<div style="position:absolute;left:1236px;top:783px;width:1px;height:4px;background:#cbcbcb;"></div>
<div style="position:absolute;left:1273px;top:584px;width:18px;height:221px;background:#f0f0f0;"></div>
<div style="position:absolute;left:1275px;top:604px;width:14px;height:18px;background:#cdcdcd;"></div>
<div style="position:absolute;left:1277px;top:591px;line-height:0"><svg width="10" height="6" viewBox="0 0 10 6"><path d="M1 5 L5 1.3 L9 5" fill="none" stroke="#606060" stroke-width="2.2"/></svg></div>
<div style="position:absolute;left:1277px;top:775px;line-height:0"><svg width="10" height="6" viewBox="0 0 10 6"><path d="M1 1 L5 4.7 L9 1" fill="none" stroke="#606060" stroke-width="2.2"/></svg></div>
<div style="position:absolute;left:662px;top:787px;width:611px;height:18px;background:#f0f0f0;"></div>
<div style="position:absolute;left:681px;top:788px;width:456px;height:15px;background:#cdcdcd;"></div>
<div style="position:absolute;left:669px;top:791px;line-height:0"><svg width="6" height="10" viewBox="0 0 6 10"><path d="M5 1 L1.3 5 L5 9" fill="none" stroke="#606060" stroke-width="2.2"/></svg></div>
<div style="position:absolute;left:1261px;top:791px;line-height:0"><svg width="6" height="10" viewBox="0 0 6 10"><path d="M1 1 L4.7 5 L1 9" fill="none" stroke="#606060" stroke-width="2.2"/></svg></div>
</body></html>
